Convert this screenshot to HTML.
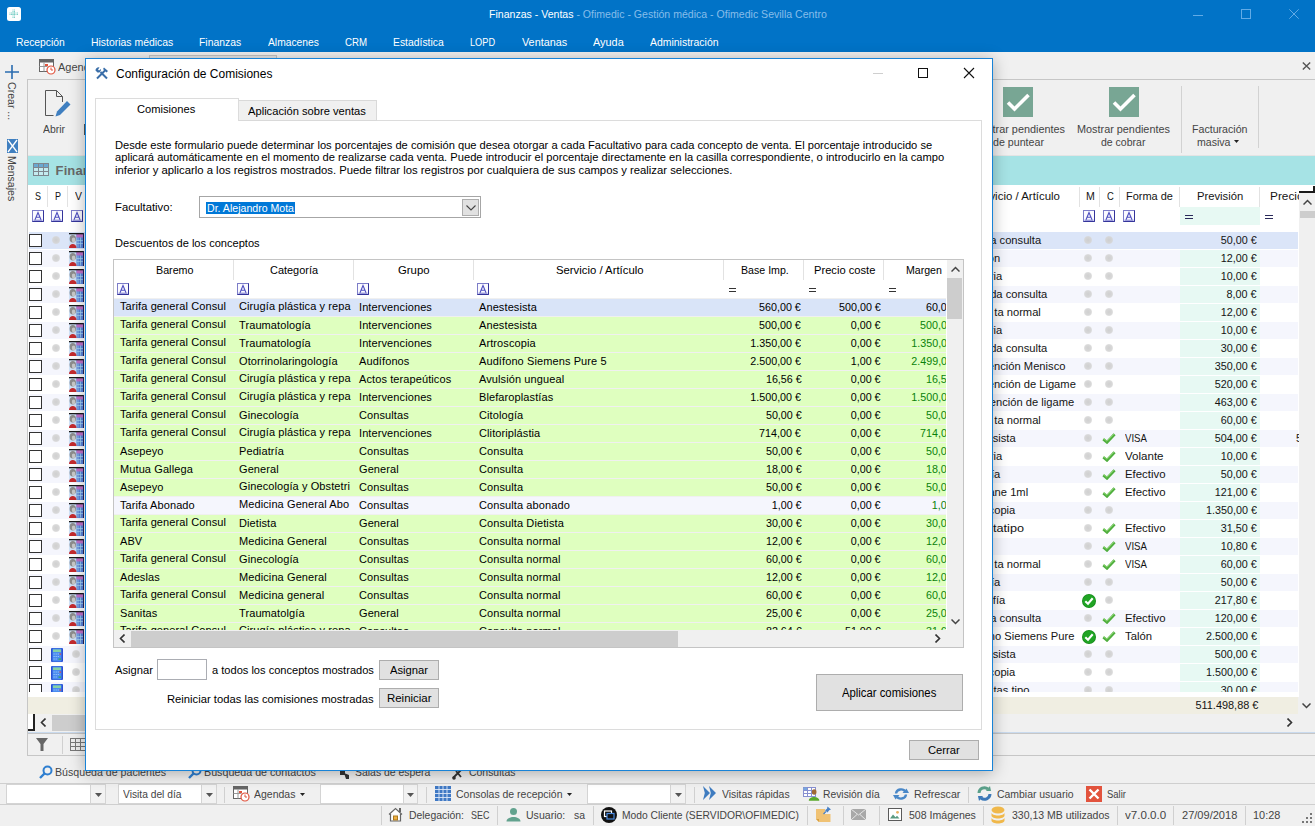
<!DOCTYPE html><html lang="es"><head><meta charset="utf-8"><title>Ofimedic</title><style>
*{box-sizing:border-box;margin:0;padding:0}
html,body{width:1315px;height:826px;overflow:hidden;background:#f0f0f0}
body{position:relative;font-family:"Liberation Sans",sans-serif;font-size:12px;color:#222}
.a{position:absolute;white-space:nowrap}
.w{color:#fff}
.ui{color:#444}
.g{color:#141414}
.d{color:#000}
</style></head><body>
<div class="a" style="left:0px;top:0px;width:1315px;height:52px;background:#0173c7;"></div>
<svg class="a" style="left:7px;top:7px" width="14" height="14" viewBox="0 0 14 14"><rect x="0" y="0" width="14" height="14" rx="2.500" fill="#fdfefe"/><path d="M6 2.500v9M7.500 2.500v9M2.500 6h9M2.500 7.500h9" stroke="#7fd0c8" stroke-width="1" stroke-dasharray="1 0.500" fill="none"/></svg>
<div class="a w" style="left:488.5px;top:7.39px;font-size:11px;line-height:14px;transform-origin:0 0;transform:scaleX(0.9592);">Finanzas - Ventas<span style="color:#86bdea"> - Ofimedic - Gestión médica - Ofimedic Sevilla Centro</span></div>
<div class="a" style="left:1193px;top:15px;width:10px;height:1px;background:#62abe6;"></div>
<div class="a" style="left:1241px;top:9px;width:10px;height:10px;background:transparent;border:1px solid #62abe6"></div>
<svg class="a" style="left:1289px;top:9px" width="10" height="10" viewBox="0 0 10 10"><path d="M0.300 0.300L9.700 9.700M9.700 0.300L0.300 9.700" stroke="#62abe6" stroke-width="1" fill="none"/></svg>
<div class="a w" style="left:16.4px;top:35.49px;font-size:11px;line-height:14px;transform-origin:0 0;transform:scaleX(0.9387);">Recepción</div>
<div class="a w" style="left:91.3px;top:35.49px;font-size:11px;line-height:14px;transform-origin:0 0;transform:scaleX(0.9480);">Historias médicas</div>
<div class="a w" style="left:199.4px;top:35.49px;font-size:11px;line-height:14px;transform-origin:0 0;transform:scaleX(0.9431);">Finanzas</div>
<div class="a w" style="left:267.6px;top:35.49px;font-size:11px;line-height:14px;transform-origin:0 0;transform:scaleX(0.9353);">Almacenes</div>
<div class="a w" style="left:344.6px;top:35.49px;font-size:11px;line-height:14px;transform-origin:0 0;transform:scaleX(0.8818);">CRM</div>
<div class="a w" style="left:392.6px;top:35.49px;font-size:11px;line-height:14px;transform-origin:0 0;transform:scaleX(0.9422);">Estadística</div>
<div class="a w" style="left:469.9px;top:35.49px;font-size:11px;line-height:14px;transform-origin:0 0;transform:scaleX(0.8375);">LOPD</div>
<div class="a w" style="left:521.7px;top:35.49px;font-size:11px;line-height:14px;transform-origin:0 0;transform:scaleX(0.9831);">Ventanas</div>
<div class="a w" style="left:592.7px;top:35.49px;font-size:11px;line-height:14px;transform-origin:0 0;transform:scaleX(0.9903);">Ayuda</div>
<div class="a w" style="left:649.7px;top:35.49px;font-size:11px;line-height:14px;transform-origin:0 0;transform:scaleX(0.9495);">Administración</div>
<svg class="a" style="left:5px;top:65px" width="14" height="14" viewBox="0 0 14 14"><path d="M7 0v14M0 7h14" stroke="#2a6cb0" stroke-width="1.600" fill="none"/></svg>
<div class="a ui" style="left:17px;top:82px;font-size:11px;line-height:10px;transform-origin:0 0;transform:rotate(90deg) scaleX(0.96)">Crear ...</div>
<svg class="a" style="left:7px;top:139px" width="11" height="14" viewBox="0 0 11 14"><rect x="0" y="0" width="11" height="14" fill="#3f7fc0"/><path d="M1 1L5.500 7L1 13M10 1L5.500 7L10 13" stroke="#fff" stroke-width="1.300" fill="none"/></svg>
<div class="a ui" style="left:17px;top:156px;font-size:11px;line-height:10px;transform-origin:0 0;transform:rotate(90deg) scaleX(0.96)">Mensajes</div>
<svg class="a" style="left:39px;top:59px" width="17" height="16" viewBox="0 0 17 16"><rect x="0.500" y="0.500" width="14" height="12" fill="#fff" stroke="#666"/><rect x="0.500" y="0.500" width="14" height="3" fill="#666"/><path d="M0.500 7.500h8M5 3.500v9" stroke="#999" fill="none"/><rect x="6" y="5" width="3" height="2" fill="#e0533d"/><circle cx="12" cy="11" r="4" fill="#fff" stroke="#e0533d" stroke-width="1.200"/><path d="M12 8.500V11h2" stroke="#e0533d" fill="none"/></svg>
<div class="a ui" style="left:58.1px;top:60.19px;font-size:11px;line-height:14px;transform-origin:0 0;transform:scaleX(0.9990);">Agenda</div>
<div class="a" style="left:149px;top:55px;width:128px;height:26px;background:#e6e6e6;border:1px solid #c4c4c4;border-bottom:none"></div>
<svg class="a" style="left:1302px;top:62px" width="9" height="8" viewBox="0 0 9 8"><path d="M0.800 0.500L8.200 7.500M8.200 0.500L0.800 7.500" stroke="#555" stroke-width="1.400" fill="none"/></svg>
<div class="a" style="left:27px;top:79px;width:1288px;height:677px;background:#f0f0f0;border-left:1px solid #c6c6c6;border-top:1px solid #c6c6c6;border-bottom:1px solid #c6c6c6"></div>
<svg class="a" style="left:44px;top:90px" width="27" height="30" viewBox="0 0 27 30"><path d="M1.500 0.500h11l6 6v5.500M1.500 0.500v25h8" stroke="#555" fill="none"/><path d="M12.500 0.500v6h6" stroke="#555" fill="none"/><path d="M23 11l3.500 3.500L16 25l-4.500 1.500L13 21.500z" fill="#3f7fc0"/></svg>
<div class="a ui" style="left:43px;top:122.19px;font-size:11px;line-height:14px;transform-origin:0 0;transform:scaleX(0.9469);">Abrir</div>
<div class="a" style="left:84px;top:124px;width:2px;height:11px;background:#555;"></div>
<svg class="a" style="left:1003px;top:87px" width="30" height="30" viewBox="0 0 30 30"><rect width="30" height="30" fill="#78a694"/><path d="M5 15.500l6.500 6.500L25.500 8" stroke="#fff" stroke-width="3.600" fill="none"/></svg>
<svg class="a" style="left:1109px;top:87px" width="30" height="30" viewBox="0 0 30 30"><rect width="30" height="30" fill="#78a694"/><path d="M5 15.500l6.500 6.500L25.500 8" stroke="#fff" stroke-width="3.600" fill="none"/></svg>
<div class="a ui" style="left:971.5px;top:122.19px;font-size:11px;line-height:14px;transform-origin:0 0;transform:scaleX(0.9876);">Mostrar pendientes</div>
<div class="a ui" style="left:992.5px;top:135.19px;font-size:11px;line-height:14px;transform-origin:0 0;transform:scaleX(0.9694);">de puntear</div>
<div class="a ui" style="left:1077.3px;top:122.19px;font-size:11px;line-height:14px;transform-origin:0 0;transform:scaleX(0.9865);">Mostrar pendientes</div>
<div class="a ui" style="left:1100.7px;top:135.19px;font-size:11px;line-height:14px;transform-origin:0 0;transform:scaleX(0.9552);">de cobrar</div>
<div class="a" style="left:1181px;top:86px;width:1px;height:67px;background:#d2d2d2;"></div>
<div class="a ui" style="left:1191.5px;top:122.19px;font-size:11px;line-height:14px;transform-origin:0 0;transform:scaleX(0.9655);">Facturación</div>
<div class="a ui" style="left:1196.5px;top:135.19px;font-size:11px;line-height:14px;transform-origin:0 0;transform:scaleX(0.9614);">masiva</div>
<svg class="a" style="left:1234px;top:140px" width="5" height="3" viewBox="0 0 5 3"><path d="M0 0h5L2.500 3z" fill="#222"/></svg>
<div class="a" style="left:1258px;top:86px;width:1px;height:62px;background:#d2d2d2;"></div>
<div class="a" style="left:28px;top:155px;width:1287px;height:1px;background:#e4e4e4;"></div>
<div class="a" style="left:28px;top:156px;width:1287px;height:29px;background:#a6e3e5;"></div>
<svg class="a" style="left:33px;top:163px" width="16" height="13" viewBox="0 0 16 13"><rect x="0.500" y="0.500" width="15" height="12" fill="#c4ecf0" stroke="#7e868e"/><rect x="1" y="1" width="14" height="3" fill="#6aa8d0"/><path d="M0.500 4.500h15M0.500 8.500h15M5.500 1v12M10.500 1v12" stroke="#7e868e" fill="none"/></svg>
<div class="a ui" style="left:55.6px;top:163.50px;font-size:13px;line-height:14px;font-weight:bold;color:#686868;letter-spacing:0.1px">Finanzas</div>
<div class="a" style="left:28px;top:185px;width:1271px;height:512px;background:#fff;"></div>
<div class="a g" style="left:35px;top:188.79px;font-size:11px;line-height:14px;transform-origin:0 0;transform:scaleX(0.8170);">S</div>
<div class="a g" style="left:55px;top:188.79px;font-size:11px;line-height:14px;transform-origin:0 0;transform:scaleX(0.8170);">P</div>
<div class="a g" style="left:75px;top:188.79px;font-size:11px;line-height:14px;transform-origin:0 0;transform:scaleX(0.9532);">V</div>
<div class="a" style="left:47px;top:186px;width:1px;height:21px;background:#e2e2e2;"></div>
<div class="a" style="left:67px;top:186px;width:1px;height:21px;background:#e2e2e2;"></div>
<svg class="a" style="left:32px;top:210px" width="12" height="12" viewBox="0 0 12 12"><rect x="0.500" y="0.500" width="11" height="11" fill="#fbfbff" stroke="#7d7dc8"/><path d="M11.500 0.500v11h-11" stroke="#34349a" fill="none"/><path d="M3 9.800L6 2.500L9 9.800M4 7.200h4" stroke="#5050c0" stroke-width="1.100" fill="none"/><path d="M1.500 10.200h9" stroke="#5050c0" stroke-width="0.800" fill="none"/></svg>
<svg class="a" style="left:51px;top:210px" width="12" height="12" viewBox="0 0 12 12"><rect x="0.500" y="0.500" width="11" height="11" fill="#fbfbff" stroke="#7d7dc8"/><path d="M11.500 0.500v11h-11" stroke="#34349a" fill="none"/><path d="M3 9.800L6 2.500L9 9.800M4 7.200h4" stroke="#5050c0" stroke-width="1.100" fill="none"/><path d="M1.500 10.200h9" stroke="#5050c0" stroke-width="0.800" fill="none"/></svg>
<svg class="a" style="left:71px;top:210px" width="12" height="12" viewBox="0 0 12 12"><rect x="0.500" y="0.500" width="11" height="11" fill="#fbfbff" stroke="#7d7dc8"/><path d="M11.500 0.500v11h-11" stroke="#34349a" fill="none"/><path d="M3 9.800L6 2.500L9 9.800M4 7.200h4" stroke="#5050c0" stroke-width="1.100" fill="none"/><path d="M1.500 10.200h9" stroke="#5050c0" stroke-width="0.800" fill="none"/></svg>
<svg class="a" style="left:1083px;top:210px" width="12" height="12" viewBox="0 0 12 12"><rect x="0.500" y="0.500" width="11" height="11" fill="#fbfbff" stroke="#7d7dc8"/><path d="M11.500 0.500v11h-11" stroke="#34349a" fill="none"/><path d="M3 9.800L6 2.500L9 9.800M4 7.200h4" stroke="#5050c0" stroke-width="1.100" fill="none"/><path d="M1.500 10.200h9" stroke="#5050c0" stroke-width="0.800" fill="none"/></svg>
<svg class="a" style="left:1103px;top:210px" width="12" height="12" viewBox="0 0 12 12"><rect x="0.500" y="0.500" width="11" height="11" fill="#fbfbff" stroke="#7d7dc8"/><path d="M11.500 0.500v11h-11" stroke="#34349a" fill="none"/><path d="M3 9.800L6 2.500L9 9.800M4 7.200h4" stroke="#5050c0" stroke-width="1.100" fill="none"/><path d="M1.500 10.200h9" stroke="#5050c0" stroke-width="0.800" fill="none"/></svg>
<svg class="a" style="left:1123px;top:210px" width="12" height="12" viewBox="0 0 12 12"><rect x="0.500" y="0.500" width="11" height="11" fill="#fbfbff" stroke="#7d7dc8"/><path d="M11.500 0.500v11h-11" stroke="#34349a" fill="none"/><path d="M3 9.800L6 2.500L9 9.800M4 7.200h4" stroke="#5050c0" stroke-width="1.100" fill="none"/><path d="M1.500 10.200h9" stroke="#5050c0" stroke-width="0.800" fill="none"/></svg>
<div class="a g" style="right:255.2px;top:188.79px;font-size:11px;line-height:14px;transform-origin:100% 0;transform:scaleX(1.04);">Servicio / Artículo</div>
<div class="a g" style="left:1085.9px;top:188.79px;font-size:11px;line-height:14px;transform-origin:0 0;transform:scaleX(0.9595);">M</div>
<div class="a g" style="left:1107.2px;top:188.79px;font-size:11px;line-height:14px;transform-origin:0 0;transform:scaleX(0.8550);">C</div>
<div class="a g" style="left:1126.3px;top:188.79px;font-size:11px;line-height:14px;transform-origin:0 0;transform:scaleX(0.9962);">Forma de</div>
<div class="a g" style="left:1197.3px;top:188.79px;font-size:11px;line-height:14px;transform-origin:0 0;transform:scaleX(1.0210);">Previsión</div>
<div class="a" style="left:1270px;top:186px;width:29px;height:20px;overflow:hidden">
<div class="a g" style="left:0.300px;top:2.790px;font-size:11px;line-height:14px;transform-origin:0 0;transform:scaleX(1.0741);">Precio</div></div>
<div class="a" style="left:1079px;top:187px;width:1px;height:20px;background:#e2e2e2;"></div>
<div class="a" style="left:1099px;top:187px;width:1px;height:20px;background:#e2e2e2;"></div>
<div class="a" style="left:1119px;top:187px;width:1px;height:20px;background:#e2e2e2;"></div>
<div class="a" style="left:1179px;top:187px;width:1px;height:20px;background:#e2e2e2;"></div>
<div class="a" style="left:1259px;top:187px;width:1px;height:20px;background:#e2e2e2;"></div>
<div class="a" style="left:1180px;top:207px;width:80px;height:18px;background:#e7f9f3;"></div>
<div class="a" style="left:1185px;top:215px;width:8px;height:1px;background:#2a2a5a;"></div>
<div class="a" style="left:1185px;top:218px;width:8px;height:1px;background:#2a2a5a;"></div>
<div class="a" style="left:1265px;top:215px;width:8px;height:1px;background:#2a2a5a;"></div>
<div class="a" style="left:1265px;top:218px;width:8px;height:1px;background:#2a2a5a;"></div>
<div class="a" style="left:0;top:0;width:1299px;height:692px;overflow:hidden">
<div class="a" style="left:29px;top:232px;width:1269px;height:17px;background:#dbe5f8;"></div>
<div class="a" style="left:29px;top:234px;width:13px;height:13px;background:#fff;border:1px solid #333"></div>
<div class="a" style="left:52px;top:236px;width:8px;height:8px;border-radius:50%;background:radial-gradient(circle at 50% 50%,rgba(205,205,205,0.950) 0%,rgba(212,212,212,0.900) 55%,rgba(222,222,222,0.400) 85%,rgba(230,230,230,0) 100%)"></div>
<svg class="a" style="left:69px;top:233px" width="15" height="15" viewBox="0 0 15 15"><rect x="0" y="0" width="15" height="15" fill="#cfe2f8"/><rect x="7.500" y="1" width="7" height="14" fill="#5a84dc"/><rect x="7.500" y="1" width="7" height="3.500" fill="#c070c8"/><path d="M9 4.500v10M11.500 4.500v10M7.500 7.500h7M7.500 10.500h7" stroke="#a8d8f0" stroke-width="0.700" fill="none"/><ellipse cx="3.800" cy="5.800" rx="3.200" ry="3.800" fill="#8c8c8c"/><ellipse cx="4.600" cy="7" rx="1.800" ry="2.400" fill="#c8c8c8"/><path d="M0 15c0-5.500 7.500-5.500 7.500 0z" fill="#c42a2e"/><rect x="0" y="0" width="15" height="1.300" fill="#1a1a1a"/><rect x="14" y="0" width="1" height="15" fill="#22225a"/></svg>
<div class="a g" style="right:257.9px;top:233.19px;font-size:11px;line-height:14px;transform-origin:100% 0;transform:scaleX(1.015);">a consulta</div>
<div class="a" style="left:1084px;top:236px;width:8px;height:8px;border-radius:50%;background:radial-gradient(circle at 50% 50%,rgba(205,205,205,0.950) 0%,rgba(212,212,212,0.900) 55%,rgba(222,222,222,0.400) 85%,rgba(230,230,230,0) 100%)"></div>
<div class="a" style="left:1104.5px;top:236px;width:8px;height:8px;border-radius:50%;background:radial-gradient(circle at 50% 50%,rgba(205,205,205,0.950) 0%,rgba(212,212,212,0.900) 55%,rgba(222,222,222,0.400) 85%,rgba(230,230,230,0) 100%)"></div>
<div class="a g" style="right:42px;top:233.19px;font-size:11px;line-height:14px;transform-origin:100% 0;transform:scaleX(0.98);">50,00 €</div>
<div class="a" style="left:29px;top:250px;width:1269px;height:17px;background:#f5f6fd;"></div>
<div class="a" style="left:1180px;top:250px;width:80px;height:17px;background:#e7f9f3;"></div>
<div class="a" style="left:29px;top:252px;width:13px;height:13px;background:#fff;border:1px solid #333"></div>
<div class="a" style="left:52px;top:254px;width:8px;height:8px;border-radius:50%;background:radial-gradient(circle at 50% 50%,rgba(205,205,205,0.950) 0%,rgba(212,212,212,0.900) 55%,rgba(222,222,222,0.400) 85%,rgba(230,230,230,0) 100%)"></div>
<svg class="a" style="left:69px;top:251px" width="15" height="15" viewBox="0 0 15 15"><rect x="0" y="0" width="15" height="15" fill="#cfe2f8"/><rect x="7.500" y="1" width="7" height="14" fill="#5a84dc"/><rect x="7.500" y="1" width="7" height="3.500" fill="#c070c8"/><path d="M9 4.500v10M11.500 4.500v10M7.500 7.500h7M7.500 10.500h7" stroke="#a8d8f0" stroke-width="0.700" fill="none"/><ellipse cx="3.800" cy="5.800" rx="3.200" ry="3.800" fill="#8c8c8c"/><ellipse cx="4.600" cy="7" rx="1.800" ry="2.400" fill="#c8c8c8"/><path d="M0 15c0-5.500 7.500-5.500 7.500 0z" fill="#c42a2e"/><rect x="0" y="0" width="15" height="1.300" fill="#1a1a1a"/><rect x="14" y="0" width="1" height="15" fill="#22225a"/></svg>
<div class="a g" style="right:298.6px;top:251.19px;font-size:11px;line-height:14px;transform-origin:100% 0;transform:scaleX(1.015);">ón</div>
<div class="a" style="left:1084px;top:254px;width:8px;height:8px;border-radius:50%;background:radial-gradient(circle at 50% 50%,rgba(205,205,205,0.950) 0%,rgba(212,212,212,0.900) 55%,rgba(222,222,222,0.400) 85%,rgba(230,230,230,0) 100%)"></div>
<div class="a" style="left:1104.5px;top:254px;width:8px;height:8px;border-radius:50%;background:radial-gradient(circle at 50% 50%,rgba(205,205,205,0.950) 0%,rgba(212,212,212,0.900) 55%,rgba(222,222,222,0.400) 85%,rgba(230,230,230,0) 100%)"></div>
<div class="a g" style="right:42px;top:251.19px;font-size:11px;line-height:14px;transform-origin:100% 0;transform:scaleX(0.98);">12,00 €</div>
<div class="a" style="left:29px;top:268px;width:1269px;height:17px;background:#ffffff;"></div>
<div class="a" style="left:1180px;top:268px;width:80px;height:17px;background:#e7f9f3;"></div>
<div class="a" style="left:29px;top:270px;width:13px;height:13px;background:#fff;border:1px solid #333"></div>
<div class="a" style="left:52px;top:272px;width:8px;height:8px;border-radius:50%;background:radial-gradient(circle at 50% 50%,rgba(205,205,205,0.950) 0%,rgba(212,212,212,0.900) 55%,rgba(222,222,222,0.400) 85%,rgba(230,230,230,0) 100%)"></div>
<svg class="a" style="left:69px;top:269px" width="15" height="15" viewBox="0 0 15 15"><rect x="0" y="0" width="15" height="15" fill="#cfe2f8"/><rect x="7.500" y="1" width="7" height="14" fill="#5a84dc"/><rect x="7.500" y="1" width="7" height="3.500" fill="#c070c8"/><path d="M9 4.500v10M11.500 4.500v10M7.500 7.500h7M7.500 10.500h7" stroke="#a8d8f0" stroke-width="0.700" fill="none"/><ellipse cx="3.800" cy="5.800" rx="3.200" ry="3.800" fill="#8c8c8c"/><ellipse cx="4.600" cy="7" rx="1.800" ry="2.400" fill="#c8c8c8"/><path d="M0 15c0-5.500 7.500-5.500 7.500 0z" fill="#c42a2e"/><rect x="0" y="0" width="15" height="1.300" fill="#1a1a1a"/><rect x="14" y="0" width="1" height="15" fill="#22225a"/></svg>
<div class="a g" style="right:296.5px;top:269.19px;font-size:11px;line-height:14px;transform-origin:100% 0;transform:scaleX(1.015);">ria</div>
<div class="a" style="left:1084px;top:272px;width:8px;height:8px;border-radius:50%;background:radial-gradient(circle at 50% 50%,rgba(205,205,205,0.950) 0%,rgba(212,212,212,0.900) 55%,rgba(222,222,222,0.400) 85%,rgba(230,230,230,0) 100%)"></div>
<div class="a" style="left:1104.5px;top:272px;width:8px;height:8px;border-radius:50%;background:radial-gradient(circle at 50% 50%,rgba(205,205,205,0.950) 0%,rgba(212,212,212,0.900) 55%,rgba(222,222,222,0.400) 85%,rgba(230,230,230,0) 100%)"></div>
<div class="a g" style="right:42px;top:269.19px;font-size:11px;line-height:14px;transform-origin:100% 0;transform:scaleX(0.98);">10,00 €</div>
<div class="a" style="left:29px;top:286px;width:1269px;height:17px;background:#f5f6fd;"></div>
<div class="a" style="left:1180px;top:286px;width:80px;height:17px;background:#e7f9f3;"></div>
<div class="a" style="left:29px;top:288px;width:13px;height:13px;background:#fff;border:1px solid #333"></div>
<div class="a" style="left:52px;top:290px;width:8px;height:8px;border-radius:50%;background:radial-gradient(circle at 50% 50%,rgba(205,205,205,0.950) 0%,rgba(212,212,212,0.900) 55%,rgba(222,222,222,0.400) 85%,rgba(230,230,230,0) 100%)"></div>
<svg class="a" style="left:69px;top:287px" width="15" height="15" viewBox="0 0 15 15"><rect x="0" y="0" width="15" height="15" fill="#cfe2f8"/><rect x="7.500" y="1" width="7" height="14" fill="#5a84dc"/><rect x="7.500" y="1" width="7" height="3.500" fill="#c070c8"/><path d="M9 4.500v10M11.500 4.500v10M7.500 7.500h7M7.500 10.500h7" stroke="#a8d8f0" stroke-width="0.700" fill="none"/><ellipse cx="3.800" cy="5.800" rx="3.200" ry="3.800" fill="#8c8c8c"/><ellipse cx="4.600" cy="7" rx="1.800" ry="2.400" fill="#c8c8c8"/><path d="M0 15c0-5.500 7.500-5.500 7.500 0z" fill="#c42a2e"/><rect x="0" y="0" width="15" height="1.300" fill="#1a1a1a"/><rect x="14" y="0" width="1" height="15" fill="#22225a"/></svg>
<div class="a g" style="right:251.4px;top:287.19px;font-size:11px;line-height:14px;transform-origin:100% 0;transform:scaleX(1.015);">da consulta</div>
<div class="a" style="left:1084px;top:290px;width:8px;height:8px;border-radius:50%;background:radial-gradient(circle at 50% 50%,rgba(205,205,205,0.950) 0%,rgba(212,212,212,0.900) 55%,rgba(222,222,222,0.400) 85%,rgba(230,230,230,0) 100%)"></div>
<div class="a" style="left:1104.5px;top:290px;width:8px;height:8px;border-radius:50%;background:radial-gradient(circle at 50% 50%,rgba(205,205,205,0.950) 0%,rgba(212,212,212,0.900) 55%,rgba(222,222,222,0.400) 85%,rgba(230,230,230,0) 100%)"></div>
<div class="a g" style="right:42px;top:287.19px;font-size:11px;line-height:14px;transform-origin:100% 0;transform:scaleX(0.98);">8,00 €</div>
<div class="a" style="left:29px;top:304px;width:1269px;height:17px;background:#ffffff;"></div>
<div class="a" style="left:1180px;top:304px;width:80px;height:17px;background:#e7f9f3;"></div>
<div class="a" style="left:29px;top:306px;width:13px;height:13px;background:#fff;border:1px solid #333"></div>
<div class="a" style="left:52px;top:308px;width:8px;height:8px;border-radius:50%;background:radial-gradient(circle at 50% 50%,rgba(205,205,205,0.950) 0%,rgba(212,212,212,0.900) 55%,rgba(222,222,222,0.400) 85%,rgba(230,230,230,0) 100%)"></div>
<svg class="a" style="left:69px;top:305px" width="15" height="15" viewBox="0 0 15 15"><rect x="0" y="0" width="15" height="15" fill="#cfe2f8"/><rect x="7.500" y="1" width="7" height="14" fill="#5a84dc"/><rect x="7.500" y="1" width="7" height="3.500" fill="#c070c8"/><path d="M9 4.500v10M11.500 4.500v10M7.500 7.500h7M7.500 10.500h7" stroke="#a8d8f0" stroke-width="0.700" fill="none"/><ellipse cx="3.800" cy="5.800" rx="3.200" ry="3.800" fill="#8c8c8c"/><ellipse cx="4.600" cy="7" rx="1.800" ry="2.400" fill="#c8c8c8"/><path d="M0 15c0-5.500 7.500-5.500 7.500 0z" fill="#c42a2e"/><rect x="0" y="0" width="15" height="1.300" fill="#1a1a1a"/><rect x="14" y="0" width="1" height="15" fill="#22225a"/></svg>
<div class="a g" style="right:258.5px;top:305.19px;font-size:11px;line-height:14px;transform-origin:100% 0;transform:scaleX(1.015);">ta normal</div>
<div class="a" style="left:1084px;top:308px;width:8px;height:8px;border-radius:50%;background:radial-gradient(circle at 50% 50%,rgba(205,205,205,0.950) 0%,rgba(212,212,212,0.900) 55%,rgba(222,222,222,0.400) 85%,rgba(230,230,230,0) 100%)"></div>
<div class="a" style="left:1104.5px;top:308px;width:8px;height:8px;border-radius:50%;background:radial-gradient(circle at 50% 50%,rgba(205,205,205,0.950) 0%,rgba(212,212,212,0.900) 55%,rgba(222,222,222,0.400) 85%,rgba(230,230,230,0) 100%)"></div>
<div class="a g" style="right:42px;top:305.19px;font-size:11px;line-height:14px;transform-origin:100% 0;transform:scaleX(0.98);">12,00 €</div>
<div class="a" style="left:29px;top:322px;width:1269px;height:17px;background:#f5f6fd;"></div>
<div class="a" style="left:1180px;top:322px;width:80px;height:17px;background:#e7f9f3;"></div>
<div class="a" style="left:29px;top:324px;width:13px;height:13px;background:#fff;border:1px solid #333"></div>
<div class="a" style="left:52px;top:326px;width:8px;height:8px;border-radius:50%;background:radial-gradient(circle at 50% 50%,rgba(205,205,205,0.950) 0%,rgba(212,212,212,0.900) 55%,rgba(222,222,222,0.400) 85%,rgba(230,230,230,0) 100%)"></div>
<svg class="a" style="left:69px;top:323px" width="15" height="15" viewBox="0 0 15 15"><rect x="0" y="0" width="15" height="15" fill="#cfe2f8"/><rect x="7.500" y="1" width="7" height="14" fill="#5a84dc"/><rect x="7.500" y="1" width="7" height="3.500" fill="#c070c8"/><path d="M9 4.500v10M11.500 4.500v10M7.500 7.500h7M7.500 10.500h7" stroke="#a8d8f0" stroke-width="0.700" fill="none"/><ellipse cx="3.800" cy="5.800" rx="3.200" ry="3.800" fill="#8c8c8c"/><ellipse cx="4.600" cy="7" rx="1.800" ry="2.400" fill="#c8c8c8"/><path d="M0 15c0-5.500 7.500-5.500 7.500 0z" fill="#c42a2e"/><rect x="0" y="0" width="15" height="1.300" fill="#1a1a1a"/><rect x="14" y="0" width="1" height="15" fill="#22225a"/></svg>
<div class="a g" style="right:296.5px;top:323.19px;font-size:11px;line-height:14px;transform-origin:100% 0;transform:scaleX(1.015);">ria</div>
<div class="a" style="left:1084px;top:326px;width:8px;height:8px;border-radius:50%;background:radial-gradient(circle at 50% 50%,rgba(205,205,205,0.950) 0%,rgba(212,212,212,0.900) 55%,rgba(222,222,222,0.400) 85%,rgba(230,230,230,0) 100%)"></div>
<div class="a" style="left:1104.5px;top:326px;width:8px;height:8px;border-radius:50%;background:radial-gradient(circle at 50% 50%,rgba(205,205,205,0.950) 0%,rgba(212,212,212,0.900) 55%,rgba(222,222,222,0.400) 85%,rgba(230,230,230,0) 100%)"></div>
<div class="a g" style="right:42px;top:323.19px;font-size:11px;line-height:14px;transform-origin:100% 0;transform:scaleX(0.98);">10,00 €</div>
<div class="a" style="left:29px;top:340px;width:1269px;height:17px;background:#ffffff;"></div>
<div class="a" style="left:1180px;top:340px;width:80px;height:17px;background:#e7f9f3;"></div>
<div class="a" style="left:29px;top:342px;width:13px;height:13px;background:#fff;border:1px solid #333"></div>
<div class="a" style="left:52px;top:344px;width:8px;height:8px;border-radius:50%;background:radial-gradient(circle at 50% 50%,rgba(205,205,205,0.950) 0%,rgba(212,212,212,0.900) 55%,rgba(222,222,222,0.400) 85%,rgba(230,230,230,0) 100%)"></div>
<svg class="a" style="left:69px;top:341px" width="15" height="15" viewBox="0 0 15 15"><rect x="0" y="0" width="15" height="15" fill="#cfe2f8"/><rect x="7.500" y="1" width="7" height="14" fill="#5a84dc"/><rect x="7.500" y="1" width="7" height="3.500" fill="#c070c8"/><path d="M9 4.500v10M11.500 4.500v10M7.500 7.500h7M7.500 10.500h7" stroke="#a8d8f0" stroke-width="0.700" fill="none"/><ellipse cx="3.800" cy="5.800" rx="3.200" ry="3.800" fill="#8c8c8c"/><ellipse cx="4.600" cy="7" rx="1.800" ry="2.400" fill="#c8c8c8"/><path d="M0 15c0-5.500 7.500-5.500 7.500 0z" fill="#c42a2e"/><rect x="0" y="0" width="15" height="1.300" fill="#1a1a1a"/><rect x="14" y="0" width="1" height="15" fill="#22225a"/></svg>
<div class="a g" style="right:251.4px;top:341.19px;font-size:11px;line-height:14px;transform-origin:100% 0;transform:scaleX(1.015);">da consulta</div>
<div class="a" style="left:1084px;top:344px;width:8px;height:8px;border-radius:50%;background:radial-gradient(circle at 50% 50%,rgba(205,205,205,0.950) 0%,rgba(212,212,212,0.900) 55%,rgba(222,222,222,0.400) 85%,rgba(230,230,230,0) 100%)"></div>
<div class="a" style="left:1104.5px;top:344px;width:8px;height:8px;border-radius:50%;background:radial-gradient(circle at 50% 50%,rgba(205,205,205,0.950) 0%,rgba(212,212,212,0.900) 55%,rgba(222,222,222,0.400) 85%,rgba(230,230,230,0) 100%)"></div>
<div class="a g" style="right:42px;top:341.19px;font-size:11px;line-height:14px;transform-origin:100% 0;transform:scaleX(0.98);">30,00 €</div>
<div class="a" style="left:29px;top:358px;width:1269px;height:17px;background:#f5f6fd;"></div>
<div class="a" style="left:1180px;top:358px;width:80px;height:17px;background:#e7f9f3;"></div>
<div class="a" style="left:29px;top:360px;width:13px;height:13px;background:#fff;border:1px solid #333"></div>
<div class="a" style="left:52px;top:362px;width:8px;height:8px;border-radius:50%;background:radial-gradient(circle at 50% 50%,rgba(205,205,205,0.950) 0%,rgba(212,212,212,0.900) 55%,rgba(222,222,222,0.400) 85%,rgba(230,230,230,0) 100%)"></div>
<svg class="a" style="left:69px;top:359px" width="15" height="15" viewBox="0 0 15 15"><rect x="0" y="0" width="15" height="15" fill="#cfe2f8"/><rect x="7.500" y="1" width="7" height="14" fill="#5a84dc"/><rect x="7.500" y="1" width="7" height="3.500" fill="#c070c8"/><path d="M9 4.500v10M11.500 4.500v10M7.500 7.500h7M7.500 10.500h7" stroke="#a8d8f0" stroke-width="0.700" fill="none"/><ellipse cx="3.800" cy="5.800" rx="3.200" ry="3.800" fill="#8c8c8c"/><ellipse cx="4.600" cy="7" rx="1.800" ry="2.400" fill="#c8c8c8"/><path d="M0 15c0-5.500 7.500-5.500 7.500 0z" fill="#c42a2e"/><rect x="0" y="0" width="15" height="1.300" fill="#1a1a1a"/><rect x="14" y="0" width="1" height="15" fill="#22225a"/></svg>
<div class="a g" style="right:233.7px;top:359.19px;font-size:11px;line-height:14px;transform-origin:100% 0;transform:scaleX(1.015);">ención Menisco</div>
<div class="a" style="left:1084px;top:362px;width:8px;height:8px;border-radius:50%;background:radial-gradient(circle at 50% 50%,rgba(205,205,205,0.950) 0%,rgba(212,212,212,0.900) 55%,rgba(222,222,222,0.400) 85%,rgba(230,230,230,0) 100%)"></div>
<div class="a" style="left:1104.5px;top:362px;width:8px;height:8px;border-radius:50%;background:radial-gradient(circle at 50% 50%,rgba(205,205,205,0.950) 0%,rgba(212,212,212,0.900) 55%,rgba(222,222,222,0.400) 85%,rgba(230,230,230,0) 100%)"></div>
<div class="a g" style="right:42px;top:359.19px;font-size:11px;line-height:14px;transform-origin:100% 0;transform:scaleX(0.98);">350,00 €</div>
<div class="a" style="left:29px;top:376px;width:1269px;height:17px;background:#ffffff;"></div>
<div class="a" style="left:1180px;top:376px;width:80px;height:17px;background:#e7f9f3;"></div>
<div class="a" style="left:29px;top:378px;width:13px;height:13px;background:#fff;border:1px solid #333"></div>
<div class="a" style="left:52px;top:380px;width:8px;height:8px;border-radius:50%;background:radial-gradient(circle at 50% 50%,rgba(205,205,205,0.950) 0%,rgba(212,212,212,0.900) 55%,rgba(222,222,222,0.400) 85%,rgba(230,230,230,0) 100%)"></div>
<svg class="a" style="left:69px;top:377px" width="15" height="15" viewBox="0 0 15 15"><rect x="0" y="0" width="15" height="15" fill="#cfe2f8"/><rect x="7.500" y="1" width="7" height="14" fill="#5a84dc"/><rect x="7.500" y="1" width="7" height="3.500" fill="#c070c8"/><path d="M9 4.500v10M11.500 4.500v10M7.500 7.500h7M7.500 10.500h7" stroke="#a8d8f0" stroke-width="0.700" fill="none"/><ellipse cx="3.800" cy="5.800" rx="3.200" ry="3.800" fill="#8c8c8c"/><ellipse cx="4.600" cy="7" rx="1.800" ry="2.400" fill="#c8c8c8"/><path d="M0 15c0-5.500 7.500-5.500 7.500 0z" fill="#c42a2e"/><rect x="0" y="0" width="15" height="1.300" fill="#1a1a1a"/><rect x="14" y="0" width="1" height="15" fill="#22225a"/></svg>
<div class="a g" style="right:223.1px;top:377.19px;font-size:11px;line-height:14px;transform-origin:100% 0;transform:scaleX(1.015);">ención de Ligame</div>
<div class="a" style="left:1084px;top:380px;width:8px;height:8px;border-radius:50%;background:radial-gradient(circle at 50% 50%,rgba(205,205,205,0.950) 0%,rgba(212,212,212,0.900) 55%,rgba(222,222,222,0.400) 85%,rgba(230,230,230,0) 100%)"></div>
<div class="a" style="left:1104.5px;top:380px;width:8px;height:8px;border-radius:50%;background:radial-gradient(circle at 50% 50%,rgba(205,205,205,0.950) 0%,rgba(212,212,212,0.900) 55%,rgba(222,222,222,0.400) 85%,rgba(230,230,230,0) 100%)"></div>
<div class="a g" style="right:42px;top:377.19px;font-size:11px;line-height:14px;transform-origin:100% 0;transform:scaleX(0.98);">520,00 €</div>
<div class="a" style="left:29px;top:394px;width:1269px;height:17px;background:#f5f6fd;"></div>
<div class="a" style="left:1180px;top:394px;width:80px;height:17px;background:#e7f9f3;"></div>
<div class="a" style="left:29px;top:396px;width:13px;height:13px;background:#fff;border:1px solid #333"></div>
<div class="a" style="left:52px;top:398px;width:8px;height:8px;border-radius:50%;background:radial-gradient(circle at 50% 50%,rgba(205,205,205,0.950) 0%,rgba(212,212,212,0.900) 55%,rgba(222,222,222,0.400) 85%,rgba(230,230,230,0) 100%)"></div>
<svg class="a" style="left:69px;top:395px" width="15" height="15" viewBox="0 0 15 15"><rect x="0" y="0" width="15" height="15" fill="#cfe2f8"/><rect x="7.500" y="1" width="7" height="14" fill="#5a84dc"/><rect x="7.500" y="1" width="7" height="3.500" fill="#c070c8"/><path d="M9 4.500v10M11.500 4.500v10M7.500 7.500h7M7.500 10.500h7" stroke="#a8d8f0" stroke-width="0.700" fill="none"/><ellipse cx="3.800" cy="5.800" rx="3.200" ry="3.800" fill="#8c8c8c"/><ellipse cx="4.600" cy="7" rx="1.800" ry="2.400" fill="#c8c8c8"/><path d="M0 15c0-5.500 7.500-5.500 7.500 0z" fill="#c42a2e"/><rect x="0" y="0" width="15" height="1.300" fill="#1a1a1a"/><rect x="14" y="0" width="1" height="15" fill="#22225a"/></svg>
<div class="a g" style="right:225.1px;top:395.19px;font-size:11px;line-height:14px;transform-origin:100% 0;transform:scaleX(1.015);">ención de ligame</div>
<div class="a" style="left:1084px;top:398px;width:8px;height:8px;border-radius:50%;background:radial-gradient(circle at 50% 50%,rgba(205,205,205,0.950) 0%,rgba(212,212,212,0.900) 55%,rgba(222,222,222,0.400) 85%,rgba(230,230,230,0) 100%)"></div>
<div class="a" style="left:1104.5px;top:398px;width:8px;height:8px;border-radius:50%;background:radial-gradient(circle at 50% 50%,rgba(205,205,205,0.950) 0%,rgba(212,212,212,0.900) 55%,rgba(222,222,222,0.400) 85%,rgba(230,230,230,0) 100%)"></div>
<div class="a g" style="right:42px;top:395.19px;font-size:11px;line-height:14px;transform-origin:100% 0;transform:scaleX(0.98);">463,00 €</div>
<div class="a" style="left:29px;top:412px;width:1269px;height:17px;background:#ffffff;"></div>
<div class="a" style="left:1180px;top:412px;width:80px;height:17px;background:#e7f9f3;"></div>
<div class="a" style="left:29px;top:414px;width:13px;height:13px;background:#fff;border:1px solid #333"></div>
<div class="a" style="left:52px;top:416px;width:8px;height:8px;border-radius:50%;background:radial-gradient(circle at 50% 50%,rgba(205,205,205,0.950) 0%,rgba(212,212,212,0.900) 55%,rgba(222,222,222,0.400) 85%,rgba(230,230,230,0) 100%)"></div>
<svg class="a" style="left:69px;top:413px" width="15" height="15" viewBox="0 0 15 15"><rect x="0" y="0" width="15" height="15" fill="#cfe2f8"/><rect x="7.500" y="1" width="7" height="14" fill="#5a84dc"/><rect x="7.500" y="1" width="7" height="3.500" fill="#c070c8"/><path d="M9 4.500v10M11.500 4.500v10M7.500 7.500h7M7.500 10.500h7" stroke="#a8d8f0" stroke-width="0.700" fill="none"/><ellipse cx="3.800" cy="5.800" rx="3.200" ry="3.800" fill="#8c8c8c"/><ellipse cx="4.600" cy="7" rx="1.800" ry="2.400" fill="#c8c8c8"/><path d="M0 15c0-5.500 7.500-5.500 7.500 0z" fill="#c42a2e"/><rect x="0" y="0" width="15" height="1.300" fill="#1a1a1a"/><rect x="14" y="0" width="1" height="15" fill="#22225a"/></svg>
<div class="a g" style="right:258.5px;top:413.19px;font-size:11px;line-height:14px;transform-origin:100% 0;transform:scaleX(1.015);">ta normal</div>
<div class="a" style="left:1084px;top:416px;width:8px;height:8px;border-radius:50%;background:radial-gradient(circle at 50% 50%,rgba(205,205,205,0.950) 0%,rgba(212,212,212,0.900) 55%,rgba(222,222,222,0.400) 85%,rgba(230,230,230,0) 100%)"></div>
<div class="a" style="left:1104.5px;top:416px;width:8px;height:8px;border-radius:50%;background:radial-gradient(circle at 50% 50%,rgba(205,205,205,0.950) 0%,rgba(212,212,212,0.900) 55%,rgba(222,222,222,0.400) 85%,rgba(230,230,230,0) 100%)"></div>
<div class="a g" style="right:42px;top:413.19px;font-size:11px;line-height:14px;transform-origin:100% 0;transform:scaleX(0.98);">60,00 €</div>
<div class="a" style="left:29px;top:430px;width:1269px;height:17px;background:#f5f6fd;"></div>
<div class="a" style="left:1180px;top:430px;width:80px;height:17px;background:#e7f9f3;"></div>
<div class="a" style="left:29px;top:432px;width:13px;height:13px;background:#fff;border:1px solid #333"></div>
<div class="a" style="left:52px;top:434px;width:8px;height:8px;border-radius:50%;background:radial-gradient(circle at 50% 50%,rgba(205,205,205,0.950) 0%,rgba(212,212,212,0.900) 55%,rgba(222,222,222,0.400) 85%,rgba(230,230,230,0) 100%)"></div>
<svg class="a" style="left:69px;top:431px" width="15" height="15" viewBox="0 0 15 15"><rect x="0" y="0" width="15" height="15" fill="#cfe2f8"/><rect x="7.500" y="1" width="7" height="14" fill="#5a84dc"/><rect x="7.500" y="1" width="7" height="3.500" fill="#c070c8"/><path d="M9 4.500v10M11.500 4.500v10M7.500 7.500h7M7.500 10.500h7" stroke="#a8d8f0" stroke-width="0.700" fill="none"/><ellipse cx="3.800" cy="5.800" rx="3.200" ry="3.800" fill="#8c8c8c"/><ellipse cx="4.600" cy="7" rx="1.800" ry="2.400" fill="#c8c8c8"/><path d="M0 15c0-5.500 7.500-5.500 7.500 0z" fill="#c42a2e"/><rect x="0" y="0" width="15" height="1.300" fill="#1a1a1a"/><rect x="14" y="0" width="1" height="15" fill="#22225a"/></svg>
<div class="a g" style="right:283.1px;top:431.19px;font-size:11px;line-height:14px;transform-origin:100% 0;transform:scaleX(1.015);">sista</div>
<div class="a" style="left:1084px;top:434px;width:8px;height:8px;border-radius:50%;background:radial-gradient(circle at 50% 50%,rgba(205,205,205,0.950) 0%,rgba(212,212,212,0.900) 55%,rgba(222,222,222,0.400) 85%,rgba(230,230,230,0) 100%)"></div>
<svg class="a" style="left:1101.5px;top:433px" width="14" height="11" viewBox="0 0 14 11"><path d="M1.300 6.200L5 9.300L12.600 1.300" stroke="#4fae3e" stroke-width="2.800" fill="none"/><path d="M1.600 5.500L5 8.200L12 1.100" stroke="#8ed872" stroke-width="1" fill="none"/></svg>
<div class="a g" style="left:1125px;top:431.19px;font-size:11px;line-height:14px;transform-origin:0 0;transform:scaleX(0.8773);">VISA</div>
<div class="a g" style="right:42px;top:431.19px;font-size:11px;line-height:14px;transform-origin:100% 0;transform:scaleX(0.98);">504,00 €</div>
<div class="a g" style="left:1296px;top:431.19px;font-size:11px;line-height:14px;">5</div>
<div class="a" style="left:29px;top:448px;width:1269px;height:17px;background:#ffffff;"></div>
<div class="a" style="left:1180px;top:448px;width:80px;height:17px;background:#e7f9f3;"></div>
<div class="a" style="left:29px;top:450px;width:13px;height:13px;background:#fff;border:1px solid #333"></div>
<div class="a" style="left:52px;top:452px;width:8px;height:8px;border-radius:50%;background:radial-gradient(circle at 50% 50%,rgba(205,205,205,0.950) 0%,rgba(212,212,212,0.900) 55%,rgba(222,222,222,0.400) 85%,rgba(230,230,230,0) 100%)"></div>
<svg class="a" style="left:69px;top:449px" width="15" height="15" viewBox="0 0 15 15"><rect x="0" y="0" width="15" height="15" fill="#cfe2f8"/><rect x="7.500" y="1" width="7" height="14" fill="#5a84dc"/><rect x="7.500" y="1" width="7" height="3.500" fill="#c070c8"/><path d="M9 4.500v10M11.500 4.500v10M7.500 7.500h7M7.500 10.500h7" stroke="#a8d8f0" stroke-width="0.700" fill="none"/><ellipse cx="3.800" cy="5.800" rx="3.200" ry="3.800" fill="#8c8c8c"/><ellipse cx="4.600" cy="7" rx="1.800" ry="2.400" fill="#c8c8c8"/><path d="M0 15c0-5.500 7.500-5.500 7.500 0z" fill="#c42a2e"/><rect x="0" y="0" width="15" height="1.300" fill="#1a1a1a"/><rect x="14" y="0" width="1" height="15" fill="#22225a"/></svg>
<div class="a g" style="right:296.5px;top:449.19px;font-size:11px;line-height:14px;transform-origin:100% 0;transform:scaleX(1.015);">ria</div>
<div class="a" style="left:1084px;top:452px;width:8px;height:8px;border-radius:50%;background:radial-gradient(circle at 50% 50%,rgba(205,205,205,0.950) 0%,rgba(212,212,212,0.900) 55%,rgba(222,222,222,0.400) 85%,rgba(230,230,230,0) 100%)"></div>
<svg class="a" style="left:1101.5px;top:451px" width="14" height="11" viewBox="0 0 14 11"><path d="M1.300 6.200L5 9.300L12.600 1.300" stroke="#4fae3e" stroke-width="2.800" fill="none"/><path d="M1.600 5.500L5 8.200L12 1.100" stroke="#8ed872" stroke-width="1" fill="none"/></svg>
<div class="a g" style="left:1125px;top:449.19px;font-size:11px;line-height:14px;transform-origin:0 0;transform:scaleX(1.0490);">Volante</div>
<div class="a g" style="right:42px;top:449.19px;font-size:11px;line-height:14px;transform-origin:100% 0;transform:scaleX(0.98);">10,00 €</div>
<div class="a" style="left:29px;top:466px;width:1269px;height:17px;background:#f5f6fd;"></div>
<div class="a" style="left:1180px;top:466px;width:80px;height:17px;background:#e7f9f3;"></div>
<div class="a" style="left:29px;top:468px;width:13px;height:13px;background:#fff;border:1px solid #333"></div>
<div class="a" style="left:52px;top:470px;width:8px;height:8px;border-radius:50%;background:radial-gradient(circle at 50% 50%,rgba(205,205,205,0.950) 0%,rgba(212,212,212,0.900) 55%,rgba(222,222,222,0.400) 85%,rgba(230,230,230,0) 100%)"></div>
<svg class="a" style="left:69px;top:467px" width="15" height="15" viewBox="0 0 15 15"><rect x="0" y="0" width="15" height="15" fill="#cfe2f8"/><rect x="7.500" y="1" width="7" height="14" fill="#5a84dc"/><rect x="7.500" y="1" width="7" height="3.500" fill="#c070c8"/><path d="M9 4.500v10M11.500 4.500v10M7.500 7.500h7M7.500 10.500h7" stroke="#a8d8f0" stroke-width="0.700" fill="none"/><ellipse cx="3.800" cy="5.800" rx="3.200" ry="3.800" fill="#8c8c8c"/><ellipse cx="4.600" cy="7" rx="1.800" ry="2.400" fill="#c8c8c8"/><path d="M0 15c0-5.500 7.500-5.500 7.500 0z" fill="#c42a2e"/><rect x="0" y="0" width="15" height="1.300" fill="#1a1a1a"/><rect x="14" y="0" width="1" height="15" fill="#22225a"/></svg>
<div class="a g" style="right:298.5px;top:467.19px;font-size:11px;line-height:14px;transform-origin:100% 0;transform:scaleX(1.015);">gía</div>
<div class="a" style="left:1084px;top:470px;width:8px;height:8px;border-radius:50%;background:radial-gradient(circle at 50% 50%,rgba(205,205,205,0.950) 0%,rgba(212,212,212,0.900) 55%,rgba(222,222,222,0.400) 85%,rgba(230,230,230,0) 100%)"></div>
<svg class="a" style="left:1101.5px;top:469px" width="14" height="11" viewBox="0 0 14 11"><path d="M1.300 6.200L5 9.300L12.600 1.300" stroke="#4fae3e" stroke-width="2.800" fill="none"/><path d="M1.600 5.500L5 8.200L12 1.100" stroke="#8ed872" stroke-width="1" fill="none"/></svg>
<div class="a g" style="left:1125px;top:467.19px;font-size:11px;line-height:14px;transform-origin:0 0;transform:scaleX(1.0347);">Efectivo</div>
<div class="a g" style="right:42px;top:467.19px;font-size:11px;line-height:14px;transform-origin:100% 0;transform:scaleX(0.98);">50,00 €</div>
<div class="a" style="left:29px;top:484px;width:1269px;height:17px;background:#ffffff;"></div>
<div class="a" style="left:1180px;top:484px;width:80px;height:17px;background:#e7f9f3;"></div>
<div class="a" style="left:29px;top:486px;width:13px;height:13px;background:#fff;border:1px solid #333"></div>
<div class="a" style="left:52px;top:488px;width:8px;height:8px;border-radius:50%;background:radial-gradient(circle at 50% 50%,rgba(205,205,205,0.950) 0%,rgba(212,212,212,0.900) 55%,rgba(222,222,222,0.400) 85%,rgba(230,230,230,0) 100%)"></div>
<svg class="a" style="left:69px;top:485px" width="15" height="15" viewBox="0 0 15 15"><rect x="0" y="0" width="15" height="15" fill="#cfe2f8"/><rect x="7.500" y="1" width="7" height="14" fill="#5a84dc"/><rect x="7.500" y="1" width="7" height="3.500" fill="#c070c8"/><path d="M9 4.500v10M11.500 4.500v10M7.500 7.500h7M7.500 10.500h7" stroke="#a8d8f0" stroke-width="0.700" fill="none"/><ellipse cx="3.800" cy="5.800" rx="3.200" ry="3.800" fill="#8c8c8c"/><ellipse cx="4.600" cy="7" rx="1.800" ry="2.400" fill="#c8c8c8"/><path d="M0 15c0-5.500 7.500-5.500 7.500 0z" fill="#c42a2e"/><rect x="0" y="0" width="15" height="1.300" fill="#1a1a1a"/><rect x="14" y="0" width="1" height="15" fill="#22225a"/></svg>
<div class="a g" style="right:270.8px;top:485.19px;font-size:11px;line-height:14px;transform-origin:100% 0;transform:scaleX(1.015);">ane 1ml</div>
<div class="a" style="left:1084px;top:488px;width:8px;height:8px;border-radius:50%;background:radial-gradient(circle at 50% 50%,rgba(205,205,205,0.950) 0%,rgba(212,212,212,0.900) 55%,rgba(222,222,222,0.400) 85%,rgba(230,230,230,0) 100%)"></div>
<svg class="a" style="left:1101.5px;top:487px" width="14" height="11" viewBox="0 0 14 11"><path d="M1.300 6.200L5 9.300L12.600 1.300" stroke="#4fae3e" stroke-width="2.800" fill="none"/><path d="M1.600 5.500L5 8.200L12 1.100" stroke="#8ed872" stroke-width="1" fill="none"/></svg>
<div class="a g" style="left:1125px;top:485.19px;font-size:11px;line-height:14px;transform-origin:0 0;transform:scaleX(1.0347);">Efectivo</div>
<div class="a g" style="right:42px;top:485.19px;font-size:11px;line-height:14px;transform-origin:100% 0;transform:scaleX(0.98);">121,00 €</div>
<div class="a" style="left:29px;top:502px;width:1269px;height:17px;background:#f5f6fd;"></div>
<div class="a" style="left:1180px;top:502px;width:80px;height:17px;background:#e7f9f3;"></div>
<div class="a" style="left:29px;top:504px;width:13px;height:13px;background:#fff;border:1px solid #333"></div>
<div class="a" style="left:52px;top:506px;width:8px;height:8px;border-radius:50%;background:radial-gradient(circle at 50% 50%,rgba(205,205,205,0.950) 0%,rgba(212,212,212,0.900) 55%,rgba(222,222,222,0.400) 85%,rgba(230,230,230,0) 100%)"></div>
<svg class="a" style="left:69px;top:503px" width="15" height="15" viewBox="0 0 15 15"><rect x="0" y="0" width="15" height="15" fill="#cfe2f8"/><rect x="7.500" y="1" width="7" height="14" fill="#5a84dc"/><rect x="7.500" y="1" width="7" height="3.500" fill="#c070c8"/><path d="M9 4.500v10M11.500 4.500v10M7.500 7.500h7M7.500 10.500h7" stroke="#a8d8f0" stroke-width="0.700" fill="none"/><ellipse cx="3.800" cy="5.800" rx="3.200" ry="3.800" fill="#8c8c8c"/><ellipse cx="4.600" cy="7" rx="1.800" ry="2.400" fill="#c8c8c8"/><path d="M0 15c0-5.500 7.500-5.500 7.500 0z" fill="#c42a2e"/><rect x="0" y="0" width="15" height="1.300" fill="#1a1a1a"/><rect x="14" y="0" width="1" height="15" fill="#22225a"/></svg>
<div class="a g" style="right:283.4px;top:503.19px;font-size:11px;line-height:14px;transform-origin:100% 0;transform:scaleX(1.015);">copia</div>
<div class="a" style="left:1084px;top:506px;width:8px;height:8px;border-radius:50%;background:radial-gradient(circle at 50% 50%,rgba(205,205,205,0.950) 0%,rgba(212,212,212,0.900) 55%,rgba(222,222,222,0.400) 85%,rgba(230,230,230,0) 100%)"></div>
<div class="a" style="left:1104.5px;top:506px;width:8px;height:8px;border-radius:50%;background:radial-gradient(circle at 50% 50%,rgba(205,205,205,0.950) 0%,rgba(212,212,212,0.900) 55%,rgba(222,222,222,0.400) 85%,rgba(230,230,230,0) 100%)"></div>
<div class="a g" style="right:42px;top:503.19px;font-size:11px;line-height:14px;transform-origin:100% 0;transform:scaleX(0.98);">1.350,00 €</div>
<div class="a" style="left:29px;top:520px;width:1269px;height:17px;background:#ffffff;"></div>
<div class="a" style="left:1180px;top:520px;width:80px;height:17px;background:#e7f9f3;"></div>
<div class="a" style="left:29px;top:522px;width:13px;height:13px;background:#fff;border:1px solid #333"></div>
<div class="a" style="left:52px;top:524px;width:8px;height:8px;border-radius:50%;background:radial-gradient(circle at 50% 50%,rgba(205,205,205,0.950) 0%,rgba(212,212,212,0.900) 55%,rgba(222,222,222,0.400) 85%,rgba(230,230,230,0) 100%)"></div>
<svg class="a" style="left:69px;top:521px" width="15" height="15" viewBox="0 0 15 15"><rect x="0" y="0" width="15" height="15" fill="#cfe2f8"/><rect x="7.500" y="1" width="7" height="14" fill="#5a84dc"/><rect x="7.500" y="1" width="7" height="3.500" fill="#c070c8"/><path d="M9 4.500v10M11.500 4.500v10M7.500 7.500h7M7.500 10.500h7" stroke="#a8d8f0" stroke-width="0.700" fill="none"/><ellipse cx="3.800" cy="5.800" rx="3.200" ry="3.800" fill="#8c8c8c"/><ellipse cx="4.600" cy="7" rx="1.800" ry="2.400" fill="#c8c8c8"/><path d="M0 15c0-5.500 7.500-5.500 7.500 0z" fill="#c42a2e"/><rect x="0" y="0" width="15" height="1.300" fill="#1a1a1a"/><rect x="14" y="0" width="1" height="15" fill="#22225a"/></svg>
<div class="a g" style="left:993.3px;top:521.19px;font-size:11px;line-height:14px;transform-origin:0 0;transform:scaleX(1.1515);">tatipo</div>
<div class="a" style="left:1084px;top:524px;width:8px;height:8px;border-radius:50%;background:radial-gradient(circle at 50% 50%,rgba(205,205,205,0.950) 0%,rgba(212,212,212,0.900) 55%,rgba(222,222,222,0.400) 85%,rgba(230,230,230,0) 100%)"></div>
<svg class="a" style="left:1101.5px;top:523px" width="14" height="11" viewBox="0 0 14 11"><path d="M1.300 6.200L5 9.300L12.600 1.300" stroke="#4fae3e" stroke-width="2.800" fill="none"/><path d="M1.600 5.500L5 8.200L12 1.100" stroke="#8ed872" stroke-width="1" fill="none"/></svg>
<div class="a g" style="left:1125px;top:521.19px;font-size:11px;line-height:14px;transform-origin:0 0;transform:scaleX(1.0347);">Efectivo</div>
<div class="a g" style="right:42px;top:521.19px;font-size:11px;line-height:14px;transform-origin:100% 0;transform:scaleX(0.98);">31,50 €</div>
<div class="a" style="left:29px;top:538px;width:1269px;height:17px;background:#f5f6fd;"></div>
<div class="a" style="left:1180px;top:538px;width:80px;height:17px;background:#e7f9f3;"></div>
<div class="a" style="left:29px;top:540px;width:13px;height:13px;background:#fff;border:1px solid #333"></div>
<div class="a" style="left:52px;top:542px;width:8px;height:8px;border-radius:50%;background:radial-gradient(circle at 50% 50%,rgba(205,205,205,0.950) 0%,rgba(212,212,212,0.900) 55%,rgba(222,222,222,0.400) 85%,rgba(230,230,230,0) 100%)"></div>
<svg class="a" style="left:69px;top:539px" width="15" height="15" viewBox="0 0 15 15"><rect x="0" y="0" width="15" height="15" fill="#cfe2f8"/><rect x="7.500" y="1" width="7" height="14" fill="#5a84dc"/><rect x="7.500" y="1" width="7" height="3.500" fill="#c070c8"/><path d="M9 4.500v10M11.500 4.500v10M7.500 7.500h7M7.500 10.500h7" stroke="#a8d8f0" stroke-width="0.700" fill="none"/><ellipse cx="3.800" cy="5.800" rx="3.200" ry="3.800" fill="#8c8c8c"/><ellipse cx="4.600" cy="7" rx="1.800" ry="2.400" fill="#c8c8c8"/><path d="M0 15c0-5.500 7.500-5.500 7.500 0z" fill="#c42a2e"/><rect x="0" y="0" width="15" height="1.300" fill="#1a1a1a"/><rect x="14" y="0" width="1" height="15" fill="#22225a"/></svg>
<div class="a" style="left:1084px;top:542px;width:8px;height:8px;border-radius:50%;background:radial-gradient(circle at 50% 50%,rgba(205,205,205,0.950) 0%,rgba(212,212,212,0.900) 55%,rgba(222,222,222,0.400) 85%,rgba(230,230,230,0) 100%)"></div>
<svg class="a" style="left:1101.5px;top:541px" width="14" height="11" viewBox="0 0 14 11"><path d="M1.300 6.200L5 9.300L12.600 1.300" stroke="#4fae3e" stroke-width="2.800" fill="none"/><path d="M1.600 5.500L5 8.200L12 1.100" stroke="#8ed872" stroke-width="1" fill="none"/></svg>
<div class="a g" style="left:1125px;top:539.19px;font-size:11px;line-height:14px;transform-origin:0 0;transform:scaleX(0.8773);">VISA</div>
<div class="a g" style="right:42px;top:539.19px;font-size:11px;line-height:14px;transform-origin:100% 0;transform:scaleX(0.98);">10,80 €</div>
<div class="a" style="left:29px;top:556px;width:1269px;height:17px;background:#ffffff;"></div>
<div class="a" style="left:1180px;top:556px;width:80px;height:17px;background:#e7f9f3;"></div>
<div class="a" style="left:29px;top:558px;width:13px;height:13px;background:#fff;border:1px solid #333"></div>
<div class="a" style="left:52px;top:560px;width:8px;height:8px;border-radius:50%;background:radial-gradient(circle at 50% 50%,rgba(205,205,205,0.950) 0%,rgba(212,212,212,0.900) 55%,rgba(222,222,222,0.400) 85%,rgba(230,230,230,0) 100%)"></div>
<svg class="a" style="left:69px;top:557px" width="15" height="15" viewBox="0 0 15 15"><rect x="0" y="0" width="15" height="15" fill="#cfe2f8"/><rect x="7.500" y="1" width="7" height="14" fill="#5a84dc"/><rect x="7.500" y="1" width="7" height="3.500" fill="#c070c8"/><path d="M9 4.500v10M11.500 4.500v10M7.500 7.500h7M7.500 10.500h7" stroke="#a8d8f0" stroke-width="0.700" fill="none"/><ellipse cx="3.800" cy="5.800" rx="3.200" ry="3.800" fill="#8c8c8c"/><ellipse cx="4.600" cy="7" rx="1.800" ry="2.400" fill="#c8c8c8"/><path d="M0 15c0-5.500 7.500-5.500 7.500 0z" fill="#c42a2e"/><rect x="0" y="0" width="15" height="1.300" fill="#1a1a1a"/><rect x="14" y="0" width="1" height="15" fill="#22225a"/></svg>
<div class="a g" style="right:258.5px;top:557.19px;font-size:11px;line-height:14px;transform-origin:100% 0;transform:scaleX(1.015);">ta normal</div>
<div class="a" style="left:1084px;top:560px;width:8px;height:8px;border-radius:50%;background:radial-gradient(circle at 50% 50%,rgba(205,205,205,0.950) 0%,rgba(212,212,212,0.900) 55%,rgba(222,222,222,0.400) 85%,rgba(230,230,230,0) 100%)"></div>
<svg class="a" style="left:1101.5px;top:559px" width="14" height="11" viewBox="0 0 14 11"><path d="M1.300 6.200L5 9.300L12.600 1.300" stroke="#4fae3e" stroke-width="2.800" fill="none"/><path d="M1.600 5.500L5 8.200L12 1.100" stroke="#8ed872" stroke-width="1" fill="none"/></svg>
<div class="a g" style="left:1125px;top:557.19px;font-size:11px;line-height:14px;transform-origin:0 0;transform:scaleX(0.8773);">VISA</div>
<div class="a g" style="right:42px;top:557.19px;font-size:11px;line-height:14px;transform-origin:100% 0;transform:scaleX(0.98);">60,00 €</div>
<div class="a" style="left:29px;top:574px;width:1269px;height:17px;background:#f5f6fd;"></div>
<div class="a" style="left:1180px;top:574px;width:80px;height:17px;background:#e7f9f3;"></div>
<div class="a" style="left:29px;top:576px;width:13px;height:13px;background:#fff;border:1px solid #333"></div>
<div class="a" style="left:52px;top:578px;width:8px;height:8px;border-radius:50%;background:radial-gradient(circle at 50% 50%,rgba(205,205,205,0.950) 0%,rgba(212,212,212,0.900) 55%,rgba(222,222,222,0.400) 85%,rgba(230,230,230,0) 100%)"></div>
<svg class="a" style="left:69px;top:575px" width="15" height="15" viewBox="0 0 15 15"><rect x="0" y="0" width="15" height="15" fill="#cfe2f8"/><rect x="7.500" y="1" width="7" height="14" fill="#5a84dc"/><rect x="7.500" y="1" width="7" height="3.500" fill="#c070c8"/><path d="M9 4.500v10M11.500 4.500v10M7.500 7.500h7M7.500 10.500h7" stroke="#a8d8f0" stroke-width="0.700" fill="none"/><ellipse cx="3.800" cy="5.800" rx="3.200" ry="3.800" fill="#8c8c8c"/><ellipse cx="4.600" cy="7" rx="1.800" ry="2.400" fill="#c8c8c8"/><path d="M0 15c0-5.500 7.500-5.500 7.500 0z" fill="#c42a2e"/><rect x="0" y="0" width="15" height="1.300" fill="#1a1a1a"/><rect x="14" y="0" width="1" height="15" fill="#22225a"/></svg>
<div class="a g" style="right:298.5px;top:575.19px;font-size:11px;line-height:14px;transform-origin:100% 0;transform:scaleX(1.015);">gía</div>
<div class="a" style="left:1084px;top:578px;width:8px;height:8px;border-radius:50%;background:radial-gradient(circle at 50% 50%,rgba(205,205,205,0.950) 0%,rgba(212,212,212,0.900) 55%,rgba(222,222,222,0.400) 85%,rgba(230,230,230,0) 100%)"></div>
<div class="a" style="left:1104.5px;top:578px;width:8px;height:8px;border-radius:50%;background:radial-gradient(circle at 50% 50%,rgba(205,205,205,0.950) 0%,rgba(212,212,212,0.900) 55%,rgba(222,222,222,0.400) 85%,rgba(230,230,230,0) 100%)"></div>
<div class="a g" style="right:42px;top:575.19px;font-size:11px;line-height:14px;transform-origin:100% 0;transform:scaleX(0.98);">50,00 €</div>
<div class="a" style="left:29px;top:592px;width:1269px;height:17px;background:#ffffff;"></div>
<div class="a" style="left:1180px;top:592px;width:80px;height:17px;background:#e7f9f3;"></div>
<div class="a" style="left:29px;top:594px;width:13px;height:13px;background:#fff;border:1px solid #333"></div>
<div class="a" style="left:52px;top:596px;width:8px;height:8px;border-radius:50%;background:radial-gradient(circle at 50% 50%,rgba(205,205,205,0.950) 0%,rgba(212,212,212,0.900) 55%,rgba(222,222,222,0.400) 85%,rgba(230,230,230,0) 100%)"></div>
<svg class="a" style="left:69px;top:593px" width="15" height="15" viewBox="0 0 15 15"><rect x="0" y="0" width="15" height="15" fill="#cfe2f8"/><rect x="7.500" y="1" width="7" height="14" fill="#5a84dc"/><rect x="7.500" y="1" width="7" height="3.500" fill="#c070c8"/><path d="M9 4.500v10M11.500 4.500v10M7.500 7.500h7M7.500 10.500h7" stroke="#a8d8f0" stroke-width="0.700" fill="none"/><ellipse cx="3.800" cy="5.800" rx="3.200" ry="3.800" fill="#8c8c8c"/><ellipse cx="4.600" cy="7" rx="1.800" ry="2.400" fill="#c8c8c8"/><path d="M0 15c0-5.500 7.500-5.500 7.500 0z" fill="#c42a2e"/><rect x="0" y="0" width="15" height="1.300" fill="#1a1a1a"/><rect x="14" y="0" width="1" height="15" fill="#22225a"/></svg>
<div class="a g" style="right:293.8px;top:593.19px;font-size:11px;line-height:14px;transform-origin:100% 0;transform:scaleX(1.015);">fía</div>
<svg class="a" style="left:1081.5px;top:593.5px" width="14" height="14" viewBox="0 0 14 14"><circle cx="7" cy="7" r="7" fill="#178c1c"/><circle cx="7" cy="7" r="6.200" fill="#20a424"/><path d="M3.300 7.200L6 9.800L10.700 4.300" stroke="#fff" stroke-width="2.100" fill="none"/></svg>
<div class="a" style="left:1104.5px;top:596px;width:8px;height:8px;border-radius:50%;background:radial-gradient(circle at 50% 50%,rgba(205,205,205,0.950) 0%,rgba(212,212,212,0.900) 55%,rgba(222,222,222,0.400) 85%,rgba(230,230,230,0) 100%)"></div>
<div class="a g" style="right:42px;top:593.19px;font-size:11px;line-height:14px;transform-origin:100% 0;transform:scaleX(0.98);">217,80 €</div>
<div class="a" style="left:29px;top:610px;width:1269px;height:17px;background:#f5f6fd;"></div>
<div class="a" style="left:1180px;top:610px;width:80px;height:17px;background:#e7f9f3;"></div>
<div class="a" style="left:29px;top:612px;width:13px;height:13px;background:#fff;border:1px solid #333"></div>
<div class="a" style="left:52px;top:614px;width:8px;height:8px;border-radius:50%;background:radial-gradient(circle at 50% 50%,rgba(205,205,205,0.950) 0%,rgba(212,212,212,0.900) 55%,rgba(222,222,222,0.400) 85%,rgba(230,230,230,0) 100%)"></div>
<svg class="a" style="left:69px;top:611px" width="15" height="15" viewBox="0 0 15 15"><rect x="0" y="0" width="15" height="15" fill="#cfe2f8"/><rect x="7.500" y="1" width="7" height="14" fill="#5a84dc"/><rect x="7.500" y="1" width="7" height="3.500" fill="#c070c8"/><path d="M9 4.500v10M11.500 4.500v10M7.500 7.500h7M7.500 10.500h7" stroke="#a8d8f0" stroke-width="0.700" fill="none"/><ellipse cx="3.800" cy="5.800" rx="3.200" ry="3.800" fill="#8c8c8c"/><ellipse cx="4.600" cy="7" rx="1.800" ry="2.400" fill="#c8c8c8"/><path d="M0 15c0-5.500 7.500-5.500 7.500 0z" fill="#c42a2e"/><rect x="0" y="0" width="15" height="1.300" fill="#1a1a1a"/><rect x="14" y="0" width="1" height="15" fill="#22225a"/></svg>
<div class="a g" style="right:257.9px;top:611.19px;font-size:11px;line-height:14px;transform-origin:100% 0;transform:scaleX(1.015);">a consulta</div>
<div class="a" style="left:1084px;top:614px;width:8px;height:8px;border-radius:50%;background:radial-gradient(circle at 50% 50%,rgba(205,205,205,0.950) 0%,rgba(212,212,212,0.900) 55%,rgba(222,222,222,0.400) 85%,rgba(230,230,230,0) 100%)"></div>
<svg class="a" style="left:1101.5px;top:613px" width="14" height="11" viewBox="0 0 14 11"><path d="M1.300 6.200L5 9.300L12.600 1.300" stroke="#4fae3e" stroke-width="2.800" fill="none"/><path d="M1.600 5.500L5 8.200L12 1.100" stroke="#8ed872" stroke-width="1" fill="none"/></svg>
<div class="a g" style="left:1125px;top:611.19px;font-size:11px;line-height:14px;transform-origin:0 0;transform:scaleX(1.0347);">Efectivo</div>
<div class="a g" style="right:42px;top:611.19px;font-size:11px;line-height:14px;transform-origin:100% 0;transform:scaleX(0.98);">120,00 €</div>
<div class="a" style="left:29px;top:628px;width:1269px;height:17px;background:#ffffff;"></div>
<div class="a" style="left:1180px;top:628px;width:80px;height:17px;background:#e7f9f3;"></div>
<div class="a" style="left:29px;top:630px;width:13px;height:13px;background:#fff;border:1px solid #333"></div>
<div class="a" style="left:52px;top:632px;width:8px;height:8px;border-radius:50%;background:radial-gradient(circle at 50% 50%,rgba(205,205,205,0.950) 0%,rgba(212,212,212,0.900) 55%,rgba(222,222,222,0.400) 85%,rgba(230,230,230,0) 100%)"></div>
<svg class="a" style="left:69px;top:629px" width="15" height="15" viewBox="0 0 15 15"><rect x="0" y="0" width="15" height="15" fill="#cfe2f8"/><rect x="7.500" y="1" width="7" height="14" fill="#5a84dc"/><rect x="7.500" y="1" width="7" height="3.500" fill="#c070c8"/><path d="M9 4.500v10M11.500 4.500v10M7.500 7.500h7M7.500 10.500h7" stroke="#a8d8f0" stroke-width="0.700" fill="none"/><ellipse cx="3.800" cy="5.800" rx="3.200" ry="3.800" fill="#8c8c8c"/><ellipse cx="4.600" cy="7" rx="1.800" ry="2.400" fill="#c8c8c8"/><path d="M0 15c0-5.500 7.500-5.500 7.500 0z" fill="#c42a2e"/><rect x="0" y="0" width="15" height="1.300" fill="#1a1a1a"/><rect x="14" y="0" width="1" height="15" fill="#22225a"/></svg>
<div class="a g" style="right:224.5px;top:629.19px;font-size:11px;line-height:14px;transform-origin:100% 0;transform:scaleX(1.015);">no Siemens Pure</div>
<svg class="a" style="left:1081.5px;top:629.5px" width="14" height="14" viewBox="0 0 14 14"><circle cx="7" cy="7" r="7" fill="#178c1c"/><circle cx="7" cy="7" r="6.200" fill="#20a424"/><path d="M3.300 7.200L6 9.800L10.700 4.300" stroke="#fff" stroke-width="2.100" fill="none"/></svg>
<svg class="a" style="left:1101.5px;top:631px" width="14" height="11" viewBox="0 0 14 11"><path d="M1.300 6.200L5 9.300L12.600 1.300" stroke="#4fae3e" stroke-width="2.800" fill="none"/><path d="M1.600 5.500L5 8.200L12 1.100" stroke="#8ed872" stroke-width="1" fill="none"/></svg>
<div class="a g" style="left:1125px;top:629.19px;font-size:11px;line-height:14px;transform-origin:0 0;transform:scaleX(1.0267);">Talón</div>
<div class="a g" style="right:42px;top:629.19px;font-size:11px;line-height:14px;transform-origin:100% 0;transform:scaleX(0.98);">2.500,00 €</div>
<div class="a" style="left:29px;top:646px;width:1269px;height:17px;background:#f5f6fd;"></div>
<div class="a" style="left:1180px;top:646px;width:80px;height:17px;background:#e7f9f3;"></div>
<div class="a" style="left:29px;top:648px;width:13px;height:13px;background:#fff;border:1px solid #333"></div>
<svg class="a" style="left:51px;top:648px" width="12" height="14" viewBox="0 0 12 14"><rect x="0" y="0" width="12" height="14" rx="1" fill="#2a50d4"/><rect x="1.500" y="0.500" width="9" height="13" fill="#4a8cf0"/><rect x="2" y="1.500" width="8" height="2.500" fill="#86d2a4"/><path d="M2.500 6h5.500M2.500 8.500h5.500M2.500 11h4" stroke="#9cc8fa" stroke-width="1.200" stroke-dasharray="1.200 0.900" fill="none"/><rect x="8.500" y="5.500" width="1.500" height="1.200" fill="#e04848"/><rect x="7.500" y="10.500" width="2.500" height="1.200" fill="#38b048"/></svg>
<div class="a" style="left:72px;top:650px;width:8px;height:8px;border-radius:50%;background:radial-gradient(circle at 50% 50%,rgba(205,205,205,0.950) 0%,rgba(212,212,212,0.900) 55%,rgba(222,222,222,0.400) 85%,rgba(230,230,230,0) 100%)"></div>
<div class="a g" style="right:283.1px;top:647.19px;font-size:11px;line-height:14px;transform-origin:100% 0;transform:scaleX(1.015);">sista</div>
<div class="a" style="left:1084px;top:650px;width:8px;height:8px;border-radius:50%;background:radial-gradient(circle at 50% 50%,rgba(205,205,205,0.950) 0%,rgba(212,212,212,0.900) 55%,rgba(222,222,222,0.400) 85%,rgba(230,230,230,0) 100%)"></div>
<div class="a" style="left:1104.5px;top:650px;width:8px;height:8px;border-radius:50%;background:radial-gradient(circle at 50% 50%,rgba(205,205,205,0.950) 0%,rgba(212,212,212,0.900) 55%,rgba(222,222,222,0.400) 85%,rgba(230,230,230,0) 100%)"></div>
<div class="a g" style="right:42px;top:647.19px;font-size:11px;line-height:14px;transform-origin:100% 0;transform:scaleX(0.98);">500,00 €</div>
<div class="a" style="left:29px;top:664px;width:1269px;height:17px;background:#ffffff;"></div>
<div class="a" style="left:1180px;top:664px;width:80px;height:17px;background:#e7f9f3;"></div>
<div class="a" style="left:29px;top:666px;width:13px;height:13px;background:#fff;border:1px solid #333"></div>
<svg class="a" style="left:51px;top:666px" width="12" height="14" viewBox="0 0 12 14"><rect x="0" y="0" width="12" height="14" rx="1" fill="#2a50d4"/><rect x="1.500" y="0.500" width="9" height="13" fill="#4a8cf0"/><rect x="2" y="1.500" width="8" height="2.500" fill="#86d2a4"/><path d="M2.500 6h5.500M2.500 8.500h5.500M2.500 11h4" stroke="#9cc8fa" stroke-width="1.200" stroke-dasharray="1.200 0.900" fill="none"/><rect x="8.500" y="5.500" width="1.500" height="1.200" fill="#e04848"/><rect x="7.500" y="10.500" width="2.500" height="1.200" fill="#38b048"/></svg>
<div class="a" style="left:72px;top:668px;width:8px;height:8px;border-radius:50%;background:radial-gradient(circle at 50% 50%,rgba(205,205,205,0.950) 0%,rgba(212,212,212,0.900) 55%,rgba(222,222,222,0.400) 85%,rgba(230,230,230,0) 100%)"></div>
<div class="a g" style="right:283.4px;top:665.19px;font-size:11px;line-height:14px;transform-origin:100% 0;transform:scaleX(1.015);">copia</div>
<div class="a" style="left:1084px;top:668px;width:8px;height:8px;border-radius:50%;background:radial-gradient(circle at 50% 50%,rgba(205,205,205,0.950) 0%,rgba(212,212,212,0.900) 55%,rgba(222,222,222,0.400) 85%,rgba(230,230,230,0) 100%)"></div>
<div class="a" style="left:1104.5px;top:668px;width:8px;height:8px;border-radius:50%;background:radial-gradient(circle at 50% 50%,rgba(205,205,205,0.950) 0%,rgba(212,212,212,0.900) 55%,rgba(222,222,222,0.400) 85%,rgba(230,230,230,0) 100%)"></div>
<div class="a g" style="right:42px;top:665.19px;font-size:11px;line-height:14px;transform-origin:100% 0;transform:scaleX(0.98);">1.500,00 €</div>
<div class="a" style="left:29px;top:682px;width:1269px;height:17px;background:#f5f6fd;"></div>
<div class="a" style="left:1180px;top:682px;width:80px;height:17px;background:#e7f9f3;"></div>
<div class="a" style="left:29px;top:684px;width:13px;height:13px;background:#fff;border:1px solid #333"></div>
<svg class="a" style="left:51px;top:684px" width="12" height="14" viewBox="0 0 12 14"><rect x="0" y="0" width="12" height="14" rx="1" fill="#2a50d4"/><rect x="1.500" y="0.500" width="9" height="13" fill="#4a8cf0"/><rect x="2" y="1.500" width="8" height="2.500" fill="#86d2a4"/><path d="M2.500 6h5.500M2.500 8.500h5.500M2.500 11h4" stroke="#9cc8fa" stroke-width="1.200" stroke-dasharray="1.200 0.900" fill="none"/><rect x="8.500" y="5.500" width="1.500" height="1.200" fill="#e04848"/><rect x="7.500" y="10.500" width="2.500" height="1.200" fill="#38b048"/></svg>
<div class="a" style="left:72px;top:686px;width:8px;height:8px;border-radius:50%;background:radial-gradient(circle at 50% 50%,rgba(205,205,205,0.950) 0%,rgba(212,212,212,0.900) 55%,rgba(222,222,222,0.400) 85%,rgba(230,230,230,0) 100%)"></div>
<div class="a g" style="right:269.4px;top:683.19px;font-size:11px;line-height:14px;transform-origin:100% 0;transform:scaleX(1.015);">tas tipo</div>
<div class="a" style="left:1084px;top:686px;width:8px;height:8px;border-radius:50%;background:radial-gradient(circle at 50% 50%,rgba(205,205,205,0.950) 0%,rgba(212,212,212,0.900) 55%,rgba(222,222,222,0.400) 85%,rgba(230,230,230,0) 100%)"></div>
<div class="a" style="left:1104.5px;top:686px;width:8px;height:8px;border-radius:50%;background:radial-gradient(circle at 50% 50%,rgba(205,205,205,0.950) 0%,rgba(212,212,212,0.900) 55%,rgba(222,222,222,0.400) 85%,rgba(230,230,230,0) 100%)"></div>
<div class="a g" style="right:42px;top:683.19px;font-size:11px;line-height:14px;transform-origin:100% 0;transform:scaleX(0.98);">30,00 €</div>
</div>
<div class="a" style="left:1299px;top:193px;width:16px;height:523px;background:#f0f0f0;"></div>
<div class="a" style="left:1300px;top:211px;width:15px;height:7px;background:#cdcdcd;"></div>
<svg class="a" style="left:1302.500px;top:199px" width="9" height="6" viewBox="0 0 9 6"><path d="M0.500 5.500L4.500 1.500L8.500 5.500" stroke="#444" stroke-width="1.500" fill="none"/></svg>
<svg class="a" style="left:1302px;top:703px" width="9" height="6" viewBox="0 0 9 6"><path d="M0.500 0.500L4.500 4.500L8.500 0.500" stroke="#444" stroke-width="1.500" fill="none"/></svg>
<div class="a" style="left:1299px;top:185px;width:16px;height:6px;background:#fff;"></div>
<div class="a" style="left:1299px;top:191px;width:16px;height:2px;background:#1a1a1a;"></div>
<div class="a" style="left:1313px;top:186px;width:2px;height:6px;background:#1a1a1a;"></div>
<div class="a" style="left:28px;top:697px;width:1270px;height:17px;background:#f0eee2;"></div>
<div class="a g" style="right:56.7px;top:698.49px;font-size:11px;line-height:14px;transform-origin:100% 0;transform:scaleX(0.993);">511.498,88 €</div>
<div class="a" style="left:28px;top:714px;width:1271px;height:18px;background:#f0f0f0;"></div>
<div class="a" style="left:52px;top:715px;width:900px;height:16px;background:#cdcdcd;"></div>
<div class="a" style="left:28px;top:714px;width:5px;height:15px;background:#fff;"></div>
<div class="a" style="left:33px;top:714px;width:2px;height:17px;background:#222;"></div>
<div class="a" style="left:28px;top:729px;width:6px;height:2px;background:#222;"></div>
<svg class="a" style="left:40px;top:718px" width="6" height="9" viewBox="0 0 6 9"><path d="M5.500 0.500L1.500 4.500L5.500 8.500" stroke="#333" stroke-width="1.600" fill="none"/></svg>
<svg class="a" style="left:1287px;top:718px" width="6" height="9" viewBox="0 0 6 9"><path d="M0.500 0.500L4.500 4.500L0.500 8.500" stroke="#333" stroke-width="1.600" fill="none"/></svg>
<div class="a" style="left:28px;top:732px;width:1287px;height:1px;background:#c9daee;"></div>
<div class="a" style="left:28px;top:733px;width:1287px;height:1px;background:#c6c6c6;"></div>
<svg class="a" style="left:36px;top:738px" width="12" height="13" viewBox="0 0 12 13"><path d="M0 0h12L7.500 6v7h-3V6z" fill="#666"/></svg>
<div class="a" style="left:62px;top:736px;width:1px;height:18px;background:#d0d0d0;"></div>
<svg class="a" style="left:70px;top:738px" width="16" height="13" viewBox="0 0 16 13"><rect x="0.500" y="0.500" width="15" height="12" fill="#eee" stroke="#777"/><path d="M0.500 4.500h15M0.500 8.500h15M5.500 0v13M10.500 0v13" stroke="#777" fill="none"/></svg>
<svg class="a" style="left:39px;top:765px" width="14" height="14" viewBox="0 0 14 14"><circle cx="8.500" cy="5.500" r="4" fill="none" stroke="#2f7fd0" stroke-width="2"/><path d="M5.500 8.500L1 13" stroke="#2f7fd0" stroke-width="2.400" fill="none"/></svg>
<div class="a ui" style="left:55.2px;top:765.19px;font-size:11px;line-height:14px;transform-origin:0 0;transform:scaleX(0.9662);">Búsqueda de pacientes</div>
<svg class="a" style="left:188px;top:765px" width="14" height="14" viewBox="0 0 14 14"><circle cx="8.500" cy="5.500" r="4" fill="none" stroke="#2f7fd0" stroke-width="2"/><path d="M5.500 8.500L1 13" stroke="#2f7fd0" stroke-width="2.400" fill="none"/></svg>
<div class="a ui" style="left:204.4px;top:765.19px;font-size:11px;line-height:14px;transform-origin:0 0;transform:scaleX(0.9723);">Búsqueda de contactos</div>
<svg class="a" style="left:339px;top:768px" width="12" height="12" viewBox="0 0 12 12"><path d="M1 1h5v6H1zM5 5l5 2v4H7z" fill="#333"/></svg>
<div class="a ui" style="left:354.6px;top:765.19px;font-size:11px;line-height:14px;transform-origin:0 0;transform:scaleX(0.9484);">Salas de espera</div>
<svg class="a" style="left:451px;top:767px" width="13" height="13" viewBox="0 0 13 13"><path d="M2 11L10 3M5 4l5 6" stroke="#333" stroke-width="1.800" fill="none"/><circle cx="3" cy="11" r="1.800" fill="#333"/></svg>
<div class="a ui" style="left:468.6px;top:765.19px;font-size:11px;line-height:14px;transform-origin:0 0;transform:scaleX(0.9485);">Consultas</div>
<div class="a" style="left:0px;top:783px;width:1315px;height:1px;background:#cfcfcf;"></div>
<div class="a" style="left:6px;top:784px;width:100px;height:20px;background:#fff;border:1px solid #d4d4d4"></div>
<div class="a" style="left:90px;top:785px;width:15px;height:18px;background:#f2f2f2;border-left:1px solid #d4d4d4"></div>
<svg class="a" style="left:94.5px;top:793px" width="7" height="4" viewBox="0 0 7 4"><path d="M0 0h7L3.500 4z" fill="#555"/></svg>
<div class="a" style="left:118px;top:784px;width:99px;height:20px;background:#fff;border:1px solid #d4d4d4"></div>
<div class="a" style="left:201px;top:785px;width:15px;height:18px;background:#f2f2f2;border-left:1px solid #d4d4d4"></div>
<svg class="a" style="left:205.5px;top:793px" width="7" height="4" viewBox="0 0 7 4"><path d="M0 0h7L3.500 4z" fill="#555"/></svg>
<div class="a ui" style="left:122.8px;top:787.19px;font-size:11px;line-height:14px;transform-origin:0 0;transform:scaleX(0.9316);">Visita del día</div>
<div class="a" style="left:224px;top:787px;width:1px;height:16px;background:#d0d0d0;"></div>
<svg class="a" style="left:233px;top:786px" width="17" height="16" viewBox="0 0 17 16"><rect x="0.500" y="0.500" width="14" height="12" fill="#fff" stroke="#666"/><rect x="0.500" y="0.500" width="14" height="3" fill="#666"/><path d="M0.500 7.500h8M5 3.500v9" stroke="#999" fill="none"/><rect x="6" y="5" width="3" height="2" fill="#e0533d"/><circle cx="12" cy="11" r="4" fill="#fff" stroke="#e0533d" stroke-width="1.200"/><path d="M12 8.500V11h2" stroke="#e0533d" fill="none"/></svg>
<div class="a ui" style="left:253.6px;top:787.19px;font-size:11px;line-height:14px;transform-origin:0 0;transform:scaleX(0.9531);">Agendas</div>
<svg class="a" style="left:300px;top:793px" width="5" height="3" viewBox="0 0 5 3"><path d="M0 0h5L2.500 3z" fill="#222"/></svg>
<div class="a" style="left:320px;top:784px;width:98px;height:20px;background:#fff;border:1px solid #d4d4d4"></div>
<div class="a" style="left:403px;top:785px;width:14px;height:18px;background:#f2f2f2;border-left:1px solid #d4d4d4"></div>
<svg class="a" style="left:407px;top:793px" width="7" height="4" viewBox="0 0 7 4"><path d="M0 0h7L3.500 4z" fill="#555"/></svg>
<div class="a" style="left:426px;top:787px;width:1px;height:16px;background:#d0d0d0;"></div>
<svg class="a" style="left:435px;top:786px" width="16" height="15" viewBox="0 0 16 15"><rect x="0" y="0" width="16" height="15" fill="#3f78c4"/><path d="M0 3.500h16M0 7.500h16M0 11.500h16M4 0v15M8 0v15M12 0v15" stroke="#dfe9f8" stroke-width="0.900" fill="none"/></svg>
<div class="a ui" style="left:455.8px;top:787.19px;font-size:11px;line-height:14px;transform-origin:0 0;transform:scaleX(0.9517);">Consolas de recepción</div>
<svg class="a" style="left:567px;top:793px" width="5" height="3" viewBox="0 0 5 3"><path d="M0 0h5L2.500 3z" fill="#222"/></svg>
<div class="a" style="left:587px;top:784px;width:99px;height:20px;background:#fff;border:1px solid #d4d4d4"></div>
<div class="a" style="left:670px;top:785px;width:15px;height:18px;background:#f2f2f2;border-left:1px solid #d4d4d4"></div>
<svg class="a" style="left:674.5px;top:793px" width="7" height="4" viewBox="0 0 7 4"><path d="M0 0h7L3.500 4z" fill="#555"/></svg>
<div class="a" style="left:694px;top:787px;width:1px;height:16px;background:#d0d0d0;"></div>
<svg class="a" style="left:703px;top:786px" width="14" height="15" viewBox="0 0 14 15"><path d="M0 0l7 7L0 14l1.800-7zM6 0l7 7L6 14l1.800-7z" fill="#3f7cc0"/></svg>
<div class="a ui" style="left:722.4px;top:787.19px;font-size:11px;line-height:14px;transform-origin:0 0;transform:scaleX(0.9475);">Visitas rápidas</div>
<svg class="a" style="left:803px;top:787px" width="17" height="14" viewBox="0 0 17 14"><rect x="0.500" y="0.500" width="12" height="9" fill="#fff" stroke="#8890d0"/><rect x="0.500" y="0.500" width="4" height="3" fill="#78a8e0"/><path d="M0.500 3.500h12M0.500 6.500h12M4.500 0.500v9M8.500 0.500v9" stroke="#8890d0" fill="none"/><ellipse cx="11.200" cy="5" rx="2.300" ry="2.800" fill="#a06a34"/><path d="M5.800 13.800c0-5 10.500-5 10.500 0z" fill="#5aaa2c"/></svg>
<div class="a ui" style="left:823.2px;top:787.19px;font-size:11px;line-height:14px;transform-origin:0 0;transform:scaleX(0.9381);">Revisión día</div>
<svg class="a" style="left:893px;top:788px" width="16" height="12" viewBox="0 0 16 12"><path d="M3 5.500a5 4.500 0 0 1 9.500-1.500" stroke="#4a88c8" stroke-width="2.400" fill="none"/><path d="M13 6.500a5 4.500 0 0 1-9.500 1.500" stroke="#4a88c8" stroke-width="2.400" fill="none"/><path d="M9.500 5h6.500l-2.500-4.500z" fill="#4a88c8"/><path d="M6.500 7h-6.500l2.500 4.500z" fill="#4a88c8"/></svg>
<div class="a ui" style="left:913.6px;top:787.19px;font-size:11px;line-height:14px;transform-origin:0 0;transform:scaleX(0.9730);">Refrescar</div>
<div class="a" style="left:968px;top:787px;width:1px;height:16px;background:#d0d0d0;"></div>
<svg class="a" style="left:977px;top:786px" width="15" height="15" viewBox="0 0 15 15"><path d="M2 7a5.500 5.500 0 0 1 9-4" stroke="#5aa08a" stroke-width="3" fill="none"/><path d="M13 8a5.500 5.500 0 0 1-9 4" stroke="#3b78b8" stroke-width="3" fill="none"/><path d="M9 5l5 0l-1-5z" fill="#5aa08a"/><path d="M6 10l-5 0l1 5z" fill="#3b78b8"/></svg>
<div class="a ui" style="left:996.5px;top:787.19px;font-size:11px;line-height:14px;transform-origin:0 0;transform:scaleX(0.9479);">Cambiar usuario</div>
<svg class="a" style="left:1086px;top:786px" width="16" height="16" viewBox="0 0 16 16"><rect width="16" height="16" fill="#e2533d"/><path d="M3.500 3.500l9 9M12.500 3.500l-9 9" stroke="#fff" stroke-width="2.400" fill="none"/></svg>
<div class="a ui" style="left:1107px;top:787.19px;font-size:11px;line-height:14px;transform-origin:0 0;transform:scaleX(0.8585);">Salir</div>
<div class="a" style="left:0px;top:804px;width:1315px;height:1px;background:#cfcfcf;"></div>
<div class="a" style="left:381px;top:806px;width:1px;height:19px;background:#d0d0d0;"></div>
<div class="a" style="left:497px;top:806px;width:1px;height:19px;background:#d0d0d0;"></div>
<div class="a" style="left:593px;top:806px;width:1px;height:19px;background:#d0d0d0;"></div>
<div class="a" style="left:807px;top:806px;width:1px;height:19px;background:#d0d0d0;"></div>
<div class="a" style="left:843px;top:806px;width:1px;height:19px;background:#d0d0d0;"></div>
<div class="a" style="left:879px;top:806px;width:1px;height:19px;background:#d0d0d0;"></div>
<div class="a" style="left:983px;top:806px;width:1px;height:19px;background:#d0d0d0;"></div>
<div class="a" style="left:1117px;top:806px;width:1px;height:19px;background:#d0d0d0;"></div>
<div class="a" style="left:1173px;top:806px;width:1px;height:19px;background:#d0d0d0;"></div>
<div class="a" style="left:1245px;top:806px;width:1px;height:19px;background:#d0d0d0;"></div>
<svg class="a" style="left:388px;top:807px" width="15" height="15" viewBox="0 0 15 15"><path d="M1 7.500L7.500 1.500L14 7.500M2.500 7v7h10V7" stroke="#666" stroke-width="1.200" fill="#fff"/><rect x="5.500" y="9" width="4" height="4" fill="#f0b040" stroke="#a87820"/><rect x="11" y="1" width="2" height="4" fill="#666"/></svg>
<div class="a ui" style="left:408.8px;top:808.49px;font-size:11px;line-height:14px;transform-origin:0 0;transform:scaleX(0.9450);">Delegación:</div>
<div class="a ui" style="left:470.7px;top:808.49px;font-size:11px;line-height:14px;transform-origin:0 0;transform:scaleX(0.8133);">SEC</div>
<svg class="a" style="left:506px;top:807px" width="15" height="15" viewBox="0 0 15 15"><circle cx="7.500" cy="4.500" r="3.500" fill="#62a28e"/><path d="M0.500 14.500c0-6 14-6 14 0z" fill="#62a28e"/></svg>
<div class="a ui" style="left:525.6px;top:808.49px;font-size:11px;line-height:14px;transform-origin:0 0;transform:scaleX(0.9593);">Usuario:</div>
<div class="a ui" style="left:574px;top:808.49px;font-size:11px;line-height:14px;transform-origin:0 0;transform:scaleX(0.9462);">sa</div>
<svg class="a" style="left:601px;top:807px" width="16" height="16" viewBox="0 0 16 16"><circle cx="8" cy="8" r="8" fill="#111"/><rect x="3.500" y="4" width="7" height="5.500" fill="none" stroke="#fff" stroke-width="1.200"/><rect x="6" y="6.500" width="7" height="5.500" fill="#111" stroke="#4a8ae0" stroke-width="1.200"/></svg>
<div class="a ui" style="left:622px;top:808.49px;font-size:11px;line-height:14px;transform-origin:0 0;transform:scaleX(0.9345);">Modo Cliente (SERVIDOR\OFIMEDIC)</div>
<svg class="a" style="left:816px;top:806px" width="16" height="16" viewBox="0 0 16 16"><path d="M0 3h9v5h5.500v8H3L0 13z" fill="#f0c274"/><path d="M0 13h3v3z" fill="#d8a040"/><path d="M11.500 0.500l3.500 3-1.800 0.800-1.700 2.200-2.500-2.200 2-1.500z" fill="#4a80c4"/><path d="M10 5.500L7.500 8" stroke="#4a80c4" stroke-width="1.200"/></svg>
<svg class="a" style="left:851px;top:809px" width="15" height="11" viewBox="0 0 15 11"><rect width="15" height="11" fill="#a8a8a8"/><path d="M0 0l7.500 6L15 0M0 11l6-5.500M15 11L9 5.500" stroke="#ececec" stroke-width="0.900" fill="none"/></svg>
<svg class="a" style="left:888px;top:808px" width="14" height="13" viewBox="0 0 14 13"><rect x="0.500" y="0.500" width="13" height="12" fill="#fff" stroke="#5a5a5a"/><path d="M2 10.500l3-4 2.500 2.800 1.500-1.500 2.500 2.700z" fill="#5a9a80"/><circle cx="9.500" cy="4.300" r="1.400" fill="#e8b060"/></svg>
<div class="a ui" style="left:908.6px;top:808.49px;font-size:11px;line-height:14px;transform-origin:0 0;transform:scaleX(0.9596);">508 Imágenes</div>
<svg class="a" style="left:991px;top:806px" width="14" height="18" viewBox="0 0 14 18"><ellipse cx="7" cy="4" rx="6.500" ry="3.500" fill="#f0b84a"/><path d="M0.500 6.500c0 4 13 4 13 0v3c0 4-13 4-13 0z" fill="#f0b84a"/><path d="M0.500 11.500c0 4 13 4 13 0v3c0 4-13 4-13 0z" fill="#f0b84a"/></svg>
<div class="a ui" style="left:1012px;top:808.49px;font-size:11px;line-height:14px;transform-origin:0 0;transform:scaleX(0.9547);">330,13 MB utilizados</div>
<div class="a ui" style="left:1124.8px;top:808.49px;font-size:11px;line-height:14px;transform-origin:0 0;transform:scaleX(1.0526);">v7.0.0.0</div>
<div class="a ui" style="left:1181.7px;top:808.49px;font-size:11px;line-height:14px;transform-origin:0 0;transform:scaleX(1.0043);">27/09/2018</div>
<div class="a ui" style="left:1253px;top:808.49px;font-size:11px;line-height:14px;transform-origin:0 0;transform:scaleX(0.9916);">10:28</div>
<div class="a" style="left:1310px;top:813px;width:2px;height:2px;background:#777;"></div>
<div class="a" style="left:1306px;top:817px;width:2px;height:2px;background:#777;"></div>
<div class="a" style="left:1310px;top:817px;width:2px;height:2px;background:#777;"></div>
<div class="a" style="left:1302px;top:821px;width:2px;height:2px;background:#777;"></div>
<div class="a" style="left:1306px;top:821px;width:2px;height:2px;background:#777;"></div>
<div class="a" style="left:1310px;top:821px;width:2px;height:2px;background:#777;"></div>
<div class="a" style="left:85px;top:58px;width:908px;height:713px;background:#fff;border:1px solid #1883d7;box-shadow:0 2px 15px 0 rgba(0,0,0,0.30)"></div>
<svg class="a" style="left:95px;top:67px" width="14" height="13" viewBox="0 0 14 13"><path d="M2 11.500L10.500 3" stroke="#3a6ea8" stroke-width="2" fill="none"/><path d="M12 11.500L5.500 5" stroke="#3a6ea8" stroke-width="2" fill="none"/><path d="M0.500 3.500a3 3 0 0 1 4-3L3 2.500l1 1L6 2a3 3 0 0 1-3.500 3.500z" fill="#3a6ea8"/><path d="M9 0.500l4 3.500-1.500 1.500L8 2z" fill="#3a6ea8"/></svg>
<div class="a d" style="left:115.6px;top:66.94px;font-size:12px;line-height:14px;transform-origin:0 0;transform:scaleX(0.9978);">Configuración de Comisiones</div>
<div class="a" style="left:873px;top:73px;width:10px;height:1px;background:#cfcfcf;"></div>
<div class="a" style="left:918px;top:68px;width:10px;height:10px;background:transparent;border:1px solid #111"></div>
<svg class="a" style="left:963px;top:67px" width="12" height="12" viewBox="0 0 12 12"><path d="M1 1L11 11M11 1L1 11" stroke="#111" stroke-width="1.100" fill="none"/></svg>
<div class="a" style="left:95px;top:120px;width:887px;height:610px;background:#fff;border:1px solid #dcdcdc"></div>
<div class="a" style="left:238px;top:100px;width:139px;height:21px;background:#f0f0f0;border:1px solid #d9d9d9"></div>
<div class="a d" style="left:248.1px;top:104.19px;font-size:11px;line-height:14px;transform-origin:0 0;transform:scaleX(1.0147);">Aplicación sobre ventas</div>
<div class="a" style="left:95px;top:98px;width:144px;height:23px;background:#fff;border:1px solid #dcdcdc;border-bottom:none"></div>
<div class="a d" style="left:137.2px;top:102.19px;font-size:11px;line-height:14px;transform-origin:0 0;transform:scaleX(1.0127);">Comisiones</div>
<div class="a d" style="left:115.4px;top:137.79px;font-size:11px;line-height:14px;transform-origin:0 0;transform:scaleX(1.0124);">Desde este formulario puede determinar los porcentajes de comisión que desea otorgar a cada Facultativo para cada concepto de venta. El porcentaje introducido se</div>
<div class="a d" style="left:115.4px;top:150.29px;font-size:11px;line-height:14px;transform-origin:0 0;transform:scaleX(1.0136);">aplicará automáticamente en el momento de realizarse cada venta. Puede introducir el porcentaje directamente en la casilla correspondiente, o introducirlo en la campo</div>
<div class="a d" style="left:115.4px;top:162.79px;font-size:11px;line-height:14px;transform-origin:0 0;transform:scaleX(1.0273);">inferior y aplicarlo a los registros mostrados. Puede filtrar los registros por cualquiera de sus campos y realizar selecciones.</div>
<div class="a d" style="left:115.4px;top:199.79px;font-size:11px;line-height:14px;transform-origin:0 0;transform:scaleX(1.0240);">Facultativo:</div>
<div class="a" style="left:199px;top:196px;width:282px;height:22px;background:#fff;border:1px solid #a6a6a6"></div>
<div class="a" style="left:206px;top:202px;width:89px;height:12px;background:#0078d7;"></div>
<div class="a w" style="left:207px;top:200.59px;font-size:11px;line-height:14px;transform-origin:0 0;transform:scaleX(0.9613);">Dr. Alejandro Mota</div>
<div class="a" style="left:462px;top:199px;width:17px;height:17px;background:#e1e1e1;border:1px solid #adadad"></div>
<svg class="a" style="left:465.500px;top:205px" width="10" height="6" viewBox="0 0 10 6"><path d="M0.500 0.500L5 5L9.500 0.500" stroke="#444" stroke-width="1.100" fill="none"/></svg>
<div class="a d" style="left:115.4px;top:235.79px;font-size:11px;line-height:14px;transform-origin:0 0;transform:scaleX(1.0062);">Descuentos de los conceptos</div>
<div class="a" style="left:113px;top:259px;width:851px;height:389px;background:#fff;border:1px solid #c4c4c4"></div>
<div class="a" style="left:114px;top:298px;width:832px;height:333px;background:#f0f0f0;"></div>
<div class="a d" style="left:155.5px;top:263.09px;font-size:11px;line-height:14px;transform-origin:0 0;transform:scaleX(0.9732);">Baremo</div>
<div class="a" style="left:233px;top:260px;width:1px;height:20px;background:#e2e2e2;"></div>
<div class="a d" style="left:270px;top:263.09px;font-size:11px;line-height:14px;transform-origin:0 0;transform:scaleX(0.9935);">Categoría</div>
<div class="a" style="left:353px;top:260px;width:1px;height:20px;background:#e2e2e2;"></div>
<div class="a d" style="left:398px;top:263.09px;font-size:11px;line-height:14px;transform-origin:0 0;transform:scaleX(1.0301);">Grupo</div>
<div class="a" style="left:473px;top:260px;width:1px;height:20px;background:#e2e2e2;"></div>
<div class="a d" style="left:555.5px;top:263.09px;font-size:11px;line-height:14px;transform-origin:0 0;transform:scaleX(1.0296);">Servicio / Artículo</div>
<div class="a" style="left:723px;top:260px;width:1px;height:20px;background:#e2e2e2;"></div>
<div class="a d" style="left:740.7px;top:263.09px;font-size:11px;line-height:14px;transform-origin:0 0;transform:scaleX(0.9650);">Base Imp.</div>
<div class="a" style="left:803px;top:260px;width:1px;height:20px;background:#e2e2e2;"></div>
<div class="a d" style="left:813.6px;top:263.09px;font-size:11px;line-height:14px;transform-origin:0 0;transform:scaleX(1.0144);">Precio coste</div>
<div class="a" style="left:883px;top:260px;width:1px;height:20px;background:#e2e2e2;"></div>
<div class="a d" style="left:905.6px;top:263.09px;font-size:11px;line-height:14px;transform-origin:0 0;transform:scaleX(0.9625);">Margen</div>
<svg class="a" style="left:117px;top:283px" width="12" height="12" viewBox="0 0 12 12"><rect x="0.500" y="0.500" width="11" height="11" fill="#fbfbff" stroke="#7d7dc8"/><path d="M11.500 0.500v11h-11" stroke="#34349a" fill="none"/><path d="M3 9.800L6 2.500L9 9.800M4 7.200h4" stroke="#5050c0" stroke-width="1.100" fill="none"/><path d="M1.500 10.200h9" stroke="#5050c0" stroke-width="0.800" fill="none"/></svg>
<svg class="a" style="left:237px;top:283px" width="12" height="12" viewBox="0 0 12 12"><rect x="0.500" y="0.500" width="11" height="11" fill="#fbfbff" stroke="#7d7dc8"/><path d="M11.500 0.500v11h-11" stroke="#34349a" fill="none"/><path d="M3 9.800L6 2.500L9 9.800M4 7.200h4" stroke="#5050c0" stroke-width="1.100" fill="none"/><path d="M1.500 10.200h9" stroke="#5050c0" stroke-width="0.800" fill="none"/></svg>
<svg class="a" style="left:357px;top:283px" width="12" height="12" viewBox="0 0 12 12"><rect x="0.500" y="0.500" width="11" height="11" fill="#fbfbff" stroke="#7d7dc8"/><path d="M11.500 0.500v11h-11" stroke="#34349a" fill="none"/><path d="M3 9.800L6 2.500L9 9.800M4 7.200h4" stroke="#5050c0" stroke-width="1.100" fill="none"/><path d="M1.500 10.200h9" stroke="#5050c0" stroke-width="0.800" fill="none"/></svg>
<svg class="a" style="left:477px;top:283px" width="12" height="12" viewBox="0 0 12 12"><rect x="0.500" y="0.500" width="11" height="11" fill="#fbfbff" stroke="#7d7dc8"/><path d="M11.500 0.500v11h-11" stroke="#34349a" fill="none"/><path d="M3 9.800L6 2.500L9 9.800M4 7.200h4" stroke="#5050c0" stroke-width="1.100" fill="none"/><path d="M1.500 10.200h9" stroke="#5050c0" stroke-width="0.800" fill="none"/></svg>
<div class="a" style="left:729px;top:288px;width:7px;height:1px;background:#333;"></div>
<div class="a" style="left:729px;top:291px;width:7px;height:1px;background:#333;"></div>
<div class="a" style="left:809px;top:288px;width:7px;height:1px;background:#333;"></div>
<div class="a" style="left:809px;top:291px;width:7px;height:1px;background:#333;"></div>
<div class="a" style="left:889px;top:288px;width:7px;height:1px;background:#333;"></div>
<div class="a" style="left:889px;top:291px;width:7px;height:1px;background:#333;"></div>
<div class="a" style="left:0;top:0;width:946px;height:630px;overflow:hidden">
<div class="a" style="left:114px;top:299px;width:832px;height:17px;background:#d9e4f8;"></div>
<div class="a d" style="left:120px;top:299.39px;font-size:11px;line-height:14px;letter-spacing:0.1px">Tarifa general Consul</div>
<div class="a d" style="left:239px;top:299.39px;font-size:11px;line-height:14px;letter-spacing:0.1px">Cirugía plástica y repa</div>
<div class="a d" style="left:359px;top:300.39px;font-size:11px;line-height:14px;letter-spacing:0.1px">Intervenciones</div>
<div class="a d" style="left:479px;top:300.39px;font-size:11px;line-height:14px;letter-spacing:0.1px">Anestesista</div>
<div class="a d" style="right:144.7px;top:300.39px;font-size:11px;line-height:14px;transform-origin:100% 0;transform:scaleX(0.975);">560,00 €</div>
<div class="a d" style="right:65px;top:300.39px;font-size:11px;line-height:14px;transform-origin:100% 0;transform:scaleX(0.975);">500,00 €</div>
<div class="a d" style="right:-15.6px;top:300.39px;font-size:11px;line-height:14px;transform-origin:100% 0;transform:scaleX(0.975);color:#000">60,00 €</div>
<div class="a" style="left:114px;top:317px;width:832px;height:17px;background:#dfffbf;"></div>
<div class="a d" style="left:120px;top:317.39px;font-size:11px;line-height:14px;letter-spacing:0.1px">Tarifa general Consul</div>
<div class="a d" style="left:239px;top:318.39px;font-size:11px;line-height:14px;letter-spacing:0.1px">Traumatología</div>
<div class="a d" style="left:359px;top:318.39px;font-size:11px;line-height:14px;letter-spacing:0.1px">Intervenciones</div>
<div class="a d" style="left:479px;top:318.39px;font-size:11px;line-height:14px;letter-spacing:0.1px">Anestesista</div>
<div class="a d" style="right:144.7px;top:318.39px;font-size:11px;line-height:14px;transform-origin:100% 0;transform:scaleX(0.975);">500,00 €</div>
<div class="a d" style="right:65px;top:318.39px;font-size:11px;line-height:14px;transform-origin:100% 0;transform:scaleX(0.975);">0,00 €</div>
<div class="a d" style="right:-15.6px;top:318.39px;font-size:11px;line-height:14px;transform-origin:100% 0;transform:scaleX(0.975);color:#0a820a">500,00 €</div>
<div class="a" style="left:114px;top:335px;width:832px;height:17px;background:#dfffbf;"></div>
<div class="a d" style="left:120px;top:335.39px;font-size:11px;line-height:14px;letter-spacing:0.1px">Tarifa general Consul</div>
<div class="a d" style="left:239px;top:336.39px;font-size:11px;line-height:14px;letter-spacing:0.1px">Traumatología</div>
<div class="a d" style="left:359px;top:336.39px;font-size:11px;line-height:14px;letter-spacing:0.1px">Intervenciones</div>
<div class="a d" style="left:479px;top:336.39px;font-size:11px;line-height:14px;letter-spacing:0.1px">Artroscopia</div>
<div class="a d" style="right:144.7px;top:336.39px;font-size:11px;line-height:14px;transform-origin:100% 0;transform:scaleX(0.975);">1.350,00 €</div>
<div class="a d" style="right:65px;top:336.39px;font-size:11px;line-height:14px;transform-origin:100% 0;transform:scaleX(0.975);">0,00 €</div>
<div class="a d" style="right:-15.6px;top:336.39px;font-size:11px;line-height:14px;transform-origin:100% 0;transform:scaleX(0.975);color:#0a820a">1.350,00 €</div>
<div class="a" style="left:114px;top:353px;width:832px;height:17px;background:#dfffbf;"></div>
<div class="a d" style="left:120px;top:353.39px;font-size:11px;line-height:14px;letter-spacing:0.1px">Tarifa general Consul</div>
<div class="a d" style="left:239px;top:354.39px;font-size:11px;line-height:14px;letter-spacing:0.1px">Otorrinolaringología</div>
<div class="a d" style="left:359px;top:354.39px;font-size:11px;line-height:14px;letter-spacing:0.1px">Audífonos</div>
<div class="a d" style="left:479px;top:354.39px;font-size:11px;line-height:14px;letter-spacing:0.1px">Audífono Siemens Pure 5</div>
<div class="a d" style="right:144.7px;top:354.39px;font-size:11px;line-height:14px;transform-origin:100% 0;transform:scaleX(0.975);">2.500,00 €</div>
<div class="a d" style="right:65px;top:354.39px;font-size:11px;line-height:14px;transform-origin:100% 0;transform:scaleX(0.975);">1,00 €</div>
<div class="a d" style="right:-15.6px;top:354.39px;font-size:11px;line-height:14px;transform-origin:100% 0;transform:scaleX(0.975);color:#0a820a">2.499,00 €</div>
<div class="a" style="left:114px;top:371px;width:832px;height:17px;background:#dfffbf;"></div>
<div class="a d" style="left:120px;top:371.39px;font-size:11px;line-height:14px;letter-spacing:0.1px">Tarifa general Consul</div>
<div class="a d" style="left:239px;top:371.39px;font-size:11px;line-height:14px;letter-spacing:0.1px">Cirugía plástica y repa</div>
<div class="a d" style="left:359px;top:372.39px;font-size:11px;line-height:14px;letter-spacing:0.1px">Actos terapeúticos</div>
<div class="a d" style="left:479px;top:372.39px;font-size:11px;line-height:14px;letter-spacing:0.1px">Avulsión ungueal</div>
<div class="a d" style="right:144.7px;top:372.39px;font-size:11px;line-height:14px;transform-origin:100% 0;transform:scaleX(0.975);">16,56 €</div>
<div class="a d" style="right:65px;top:372.39px;font-size:11px;line-height:14px;transform-origin:100% 0;transform:scaleX(0.975);">0,00 €</div>
<div class="a d" style="right:-15.6px;top:372.39px;font-size:11px;line-height:14px;transform-origin:100% 0;transform:scaleX(0.975);color:#0a820a">16,56 €</div>
<div class="a" style="left:114px;top:389px;width:832px;height:17px;background:#dfffbf;"></div>
<div class="a d" style="left:120px;top:389.39px;font-size:11px;line-height:14px;letter-spacing:0.1px">Tarifa general Consul</div>
<div class="a d" style="left:239px;top:389.39px;font-size:11px;line-height:14px;letter-spacing:0.1px">Cirugía plástica y repa</div>
<div class="a d" style="left:359px;top:390.39px;font-size:11px;line-height:14px;letter-spacing:0.1px">Intervenciones</div>
<div class="a d" style="left:479px;top:390.39px;font-size:11px;line-height:14px;letter-spacing:0.1px">Blefaroplastías</div>
<div class="a d" style="right:144.7px;top:390.39px;font-size:11px;line-height:14px;transform-origin:100% 0;transform:scaleX(0.975);">1.500,00 €</div>
<div class="a d" style="right:65px;top:390.39px;font-size:11px;line-height:14px;transform-origin:100% 0;transform:scaleX(0.975);">0,00 €</div>
<div class="a d" style="right:-15.6px;top:390.39px;font-size:11px;line-height:14px;transform-origin:100% 0;transform:scaleX(0.975);color:#0a820a">1.500,00 €</div>
<div class="a" style="left:114px;top:407px;width:832px;height:17px;background:#dfffbf;"></div>
<div class="a d" style="left:120px;top:407.39px;font-size:11px;line-height:14px;letter-spacing:0.1px">Tarifa general Consul</div>
<div class="a d" style="left:239px;top:408.39px;font-size:11px;line-height:14px;letter-spacing:0.1px">Ginecología</div>
<div class="a d" style="left:359px;top:408.39px;font-size:11px;line-height:14px;letter-spacing:0.1px">Consultas</div>
<div class="a d" style="left:479px;top:408.39px;font-size:11px;line-height:14px;letter-spacing:0.1px">Citología</div>
<div class="a d" style="right:144.7px;top:408.39px;font-size:11px;line-height:14px;transform-origin:100% 0;transform:scaleX(0.975);">50,00 €</div>
<div class="a d" style="right:65px;top:408.39px;font-size:11px;line-height:14px;transform-origin:100% 0;transform:scaleX(0.975);">0,00 €</div>
<div class="a d" style="right:-15.6px;top:408.39px;font-size:11px;line-height:14px;transform-origin:100% 0;transform:scaleX(0.975);color:#0a820a">50,00 €</div>
<div class="a" style="left:114px;top:425px;width:832px;height:17px;background:#dfffbf;"></div>
<div class="a d" style="left:120px;top:425.39px;font-size:11px;line-height:14px;letter-spacing:0.1px">Tarifa general Consul</div>
<div class="a d" style="left:239px;top:425.39px;font-size:11px;line-height:14px;letter-spacing:0.1px">Cirugía plástica y repa</div>
<div class="a d" style="left:359px;top:426.39px;font-size:11px;line-height:14px;letter-spacing:0.1px">Intervenciones</div>
<div class="a d" style="left:479px;top:426.39px;font-size:11px;line-height:14px;letter-spacing:0.1px">Clitoriplástia</div>
<div class="a d" style="right:144.7px;top:426.39px;font-size:11px;line-height:14px;transform-origin:100% 0;transform:scaleX(0.975);">714,00 €</div>
<div class="a d" style="right:65px;top:426.39px;font-size:11px;line-height:14px;transform-origin:100% 0;transform:scaleX(0.975);">0,00 €</div>
<div class="a d" style="right:-15.6px;top:426.39px;font-size:11px;line-height:14px;transform-origin:100% 0;transform:scaleX(0.975);color:#0a820a">714,00 €</div>
<div class="a" style="left:114px;top:443px;width:832px;height:17px;background:#dfffbf;"></div>
<div class="a d" style="left:120px;top:444.39px;font-size:11px;line-height:14px;letter-spacing:0.1px">Asepeyo</div>
<div class="a d" style="left:239px;top:444.39px;font-size:11px;line-height:14px;letter-spacing:0.1px">Pediatría</div>
<div class="a d" style="left:359px;top:444.39px;font-size:11px;line-height:14px;letter-spacing:0.1px">Consultas</div>
<div class="a d" style="left:479px;top:444.39px;font-size:11px;line-height:14px;letter-spacing:0.1px">Consulta</div>
<div class="a d" style="right:144.7px;top:444.39px;font-size:11px;line-height:14px;transform-origin:100% 0;transform:scaleX(0.975);">50,00 €</div>
<div class="a d" style="right:65px;top:444.39px;font-size:11px;line-height:14px;transform-origin:100% 0;transform:scaleX(0.975);">0,00 €</div>
<div class="a d" style="right:-15.6px;top:444.39px;font-size:11px;line-height:14px;transform-origin:100% 0;transform:scaleX(0.975);color:#0a820a">50,00 €</div>
<div class="a" style="left:114px;top:461px;width:832px;height:17px;background:#dfffbf;"></div>
<div class="a d" style="left:120px;top:462.39px;font-size:11px;line-height:14px;letter-spacing:0.1px">Mutua Gallega</div>
<div class="a d" style="left:239px;top:462.39px;font-size:11px;line-height:14px;letter-spacing:0.1px">General</div>
<div class="a d" style="left:359px;top:462.39px;font-size:11px;line-height:14px;letter-spacing:0.1px">General</div>
<div class="a d" style="left:479px;top:462.39px;font-size:11px;line-height:14px;letter-spacing:0.1px">Consulta</div>
<div class="a d" style="right:144.7px;top:462.39px;font-size:11px;line-height:14px;transform-origin:100% 0;transform:scaleX(0.975);">18,00 €</div>
<div class="a d" style="right:65px;top:462.39px;font-size:11px;line-height:14px;transform-origin:100% 0;transform:scaleX(0.975);">0,00 €</div>
<div class="a d" style="right:-15.6px;top:462.39px;font-size:11px;line-height:14px;transform-origin:100% 0;transform:scaleX(0.975);color:#0a820a">18,00 €</div>
<div class="a" style="left:114px;top:479px;width:832px;height:17px;background:#dfffbf;"></div>
<div class="a d" style="left:120px;top:480.39px;font-size:11px;line-height:14px;letter-spacing:0.1px">Asepeyo</div>
<div class="a d" style="left:239px;top:479.39px;font-size:11px;line-height:14px;letter-spacing:0.1px">Ginecología y Obstetri</div>
<div class="a d" style="left:359px;top:480.39px;font-size:11px;line-height:14px;letter-spacing:0.1px">Consultas</div>
<div class="a d" style="left:479px;top:480.39px;font-size:11px;line-height:14px;letter-spacing:0.1px">Consulta</div>
<div class="a d" style="right:144.7px;top:480.39px;font-size:11px;line-height:14px;transform-origin:100% 0;transform:scaleX(0.975);">50,00 €</div>
<div class="a d" style="right:65px;top:480.39px;font-size:11px;line-height:14px;transform-origin:100% 0;transform:scaleX(0.975);">0,00 €</div>
<div class="a d" style="right:-15.6px;top:480.39px;font-size:11px;line-height:14px;transform-origin:100% 0;transform:scaleX(0.975);color:#0a820a">50,00 €</div>
<div class="a" style="left:114px;top:497px;width:832px;height:17px;background:#f5f6fd;"></div>
<div class="a d" style="left:120px;top:498.39px;font-size:11px;line-height:14px;letter-spacing:0.1px">Tarifa Abonado</div>
<div class="a d" style="left:239px;top:497.39px;font-size:11px;line-height:14px;letter-spacing:0.1px">Medicina General Abo</div>
<div class="a d" style="left:359px;top:498.39px;font-size:11px;line-height:14px;letter-spacing:0.1px">Consultas</div>
<div class="a d" style="left:479px;top:498.39px;font-size:11px;line-height:14px;letter-spacing:0.1px">Consulta abonado</div>
<div class="a d" style="right:144.7px;top:498.39px;font-size:11px;line-height:14px;transform-origin:100% 0;transform:scaleX(0.975);">1,00 €</div>
<div class="a d" style="right:65px;top:498.39px;font-size:11px;line-height:14px;transform-origin:100% 0;transform:scaleX(0.975);">0,00 €</div>
<div class="a d" style="right:-15.6px;top:498.39px;font-size:11px;line-height:14px;transform-origin:100% 0;transform:scaleX(0.975);color:#0a820a">1,00 €</div>
<div class="a" style="left:114px;top:515px;width:832px;height:17px;background:#dfffbf;"></div>
<div class="a d" style="left:120px;top:515.39px;font-size:11px;line-height:14px;letter-spacing:0.1px">Tarifa general Consul</div>
<div class="a d" style="left:239px;top:516.39px;font-size:11px;line-height:14px;letter-spacing:0.1px">Dietista</div>
<div class="a d" style="left:359px;top:516.39px;font-size:11px;line-height:14px;letter-spacing:0.1px">General</div>
<div class="a d" style="left:479px;top:516.39px;font-size:11px;line-height:14px;letter-spacing:0.1px">Consulta Dietista</div>
<div class="a d" style="right:144.7px;top:516.39px;font-size:11px;line-height:14px;transform-origin:100% 0;transform:scaleX(0.975);">30,00 €</div>
<div class="a d" style="right:65px;top:516.39px;font-size:11px;line-height:14px;transform-origin:100% 0;transform:scaleX(0.975);">0,00 €</div>
<div class="a d" style="right:-15.6px;top:516.39px;font-size:11px;line-height:14px;transform-origin:100% 0;transform:scaleX(0.975);color:#0a820a">30,00 €</div>
<div class="a" style="left:114px;top:533px;width:832px;height:17px;background:#dfffbf;"></div>
<div class="a d" style="left:120px;top:534.39px;font-size:11px;line-height:14px;letter-spacing:0.1px">ABV</div>
<div class="a d" style="left:239px;top:534.39px;font-size:11px;line-height:14px;letter-spacing:0.1px">Medicina General</div>
<div class="a d" style="left:359px;top:534.39px;font-size:11px;line-height:14px;letter-spacing:0.1px">Consultas</div>
<div class="a d" style="left:479px;top:534.39px;font-size:11px;line-height:14px;letter-spacing:0.1px">Consulta normal</div>
<div class="a d" style="right:144.7px;top:534.39px;font-size:11px;line-height:14px;transform-origin:100% 0;transform:scaleX(0.975);">12,00 €</div>
<div class="a d" style="right:65px;top:534.39px;font-size:11px;line-height:14px;transform-origin:100% 0;transform:scaleX(0.975);">0,00 €</div>
<div class="a d" style="right:-15.6px;top:534.39px;font-size:11px;line-height:14px;transform-origin:100% 0;transform:scaleX(0.975);color:#0a820a">12,00 €</div>
<div class="a" style="left:114px;top:551px;width:832px;height:17px;background:#dfffbf;"></div>
<div class="a d" style="left:120px;top:551.39px;font-size:11px;line-height:14px;letter-spacing:0.1px">Tarifa general Consul</div>
<div class="a d" style="left:239px;top:552.39px;font-size:11px;line-height:14px;letter-spacing:0.1px">Ginecología</div>
<div class="a d" style="left:359px;top:552.39px;font-size:11px;line-height:14px;letter-spacing:0.1px">Consultas</div>
<div class="a d" style="left:479px;top:552.39px;font-size:11px;line-height:14px;letter-spacing:0.1px">Consulta normal</div>
<div class="a d" style="right:144.7px;top:552.39px;font-size:11px;line-height:14px;transform-origin:100% 0;transform:scaleX(0.975);">60,00 €</div>
<div class="a d" style="right:65px;top:552.39px;font-size:11px;line-height:14px;transform-origin:100% 0;transform:scaleX(0.975);">0,00 €</div>
<div class="a d" style="right:-15.6px;top:552.39px;font-size:11px;line-height:14px;transform-origin:100% 0;transform:scaleX(0.975);color:#0a820a">60,00 €</div>
<div class="a" style="left:114px;top:569px;width:832px;height:17px;background:#dfffbf;"></div>
<div class="a d" style="left:120px;top:570.39px;font-size:11px;line-height:14px;letter-spacing:0.1px">Adeslas</div>
<div class="a d" style="left:239px;top:570.39px;font-size:11px;line-height:14px;letter-spacing:0.1px">Medicina General</div>
<div class="a d" style="left:359px;top:570.39px;font-size:11px;line-height:14px;letter-spacing:0.1px">Consultas</div>
<div class="a d" style="left:479px;top:570.39px;font-size:11px;line-height:14px;letter-spacing:0.1px">Consulta normal</div>
<div class="a d" style="right:144.7px;top:570.39px;font-size:11px;line-height:14px;transform-origin:100% 0;transform:scaleX(0.975);">12,00 €</div>
<div class="a d" style="right:65px;top:570.39px;font-size:11px;line-height:14px;transform-origin:100% 0;transform:scaleX(0.975);">0,00 €</div>
<div class="a d" style="right:-15.6px;top:570.39px;font-size:11px;line-height:14px;transform-origin:100% 0;transform:scaleX(0.975);color:#0a820a">12,00 €</div>
<div class="a" style="left:114px;top:587px;width:832px;height:17px;background:#dfffbf;"></div>
<div class="a d" style="left:120px;top:587.39px;font-size:11px;line-height:14px;letter-spacing:0.1px">Tarifa general Consul</div>
<div class="a d" style="left:239px;top:588.39px;font-size:11px;line-height:14px;letter-spacing:0.1px">Medicina general</div>
<div class="a d" style="left:359px;top:588.39px;font-size:11px;line-height:14px;letter-spacing:0.1px">Consultas</div>
<div class="a d" style="left:479px;top:588.39px;font-size:11px;line-height:14px;letter-spacing:0.1px">Consulta normal</div>
<div class="a d" style="right:144.7px;top:588.39px;font-size:11px;line-height:14px;transform-origin:100% 0;transform:scaleX(0.975);">60,00 €</div>
<div class="a d" style="right:65px;top:588.39px;font-size:11px;line-height:14px;transform-origin:100% 0;transform:scaleX(0.975);">0,00 €</div>
<div class="a d" style="right:-15.6px;top:588.39px;font-size:11px;line-height:14px;transform-origin:100% 0;transform:scaleX(0.975);color:#0a820a">60,00 €</div>
<div class="a" style="left:114px;top:605px;width:832px;height:17px;background:#dfffbf;"></div>
<div class="a d" style="left:120px;top:606.39px;font-size:11px;line-height:14px;letter-spacing:0.1px">Sanitas</div>
<div class="a d" style="left:239px;top:606.39px;font-size:11px;line-height:14px;letter-spacing:0.1px">Traumatolgía</div>
<div class="a d" style="left:359px;top:606.39px;font-size:11px;line-height:14px;letter-spacing:0.1px">General</div>
<div class="a d" style="left:479px;top:606.39px;font-size:11px;line-height:14px;letter-spacing:0.1px">Consulta normal</div>
<div class="a d" style="right:144.7px;top:606.39px;font-size:11px;line-height:14px;transform-origin:100% 0;transform:scaleX(0.975);">25,00 €</div>
<div class="a d" style="right:65px;top:606.39px;font-size:11px;line-height:14px;transform-origin:100% 0;transform:scaleX(0.975);">0,00 €</div>
<div class="a d" style="right:-15.6px;top:606.39px;font-size:11px;line-height:14px;transform-origin:100% 0;transform:scaleX(0.975);color:#0a820a">25,00 €</div>
<div class="a" style="left:114px;top:623px;width:832px;height:17px;background:#dfffbf;"></div>
<div class="a d" style="left:120px;top:623.39px;font-size:11px;line-height:14px;letter-spacing:0.1px">Tarifa general Consul</div>
<div class="a d" style="left:239px;top:623.39px;font-size:11px;line-height:14px;letter-spacing:0.1px">Cirugía plástica y repa</div>
<div class="a d" style="left:359px;top:624.39px;font-size:11px;line-height:14px;letter-spacing:0.1px">Consultas</div>
<div class="a d" style="left:479px;top:624.39px;font-size:11px;line-height:14px;letter-spacing:0.1px">Consulta normal</div>
<div class="a d" style="right:144.7px;top:624.39px;font-size:11px;line-height:14px;transform-origin:100% 0;transform:scaleX(0.975);">82,64 €</div>
<div class="a d" style="right:65px;top:624.39px;font-size:11px;line-height:14px;transform-origin:100% 0;transform:scaleX(0.975);">51,00 €</div>
<div class="a d" style="right:-15.6px;top:624.39px;font-size:11px;line-height:14px;transform-origin:100% 0;transform:scaleX(0.975);color:#0a820a">31,64 €</div>
</div>
<div class="a" style="left:947px;top:260px;width:16px;height:370px;background:#f0f0f0;"></div>
<div class="a" style="left:947px;top:278px;width:15px;height:41px;background:#cdcdcd;"></div>
<svg class="a" style="left:950.500px;top:266px" width="9" height="6" viewBox="0 0 9 6"><path d="M0.500 5.500L4.500 1.500L8.500 5.500" stroke="#444" stroke-width="1.500" fill="none"/></svg>
<svg class="a" style="left:950.500px;top:619px" width="9" height="6" viewBox="0 0 9 6"><path d="M0.500 0.500L4.500 4.500L8.500 0.500" stroke="#444" stroke-width="1.500" fill="none"/></svg>
<div class="a" style="left:114px;top:630px;width:849px;height:17px;background:#f0f0f0;"></div>
<div class="a" style="left:131px;top:631px;width:547px;height:16px;background:#cdcdcd;"></div>
<svg class="a" style="left:119px;top:634px" width="6" height="9" viewBox="0 0 6 9"><path d="M5.500 0.500L1.500 4.500L5.500 8.500" stroke="#333" stroke-width="1.600" fill="none"/></svg>
<svg class="a" style="left:935px;top:634px" width="6" height="9" viewBox="0 0 6 9"><path d="M0.500 0.500L4.500 4.500L0.500 8.500" stroke="#333" stroke-width="1.600" fill="none"/></svg>
<div class="a d" style="left:115px;top:662.99px;font-size:11px;line-height:14px;transform-origin:0 0;transform:scaleX(1.0162);">Asignar</div>
<div class="a" style="left:157px;top:659px;width:50px;height:21px;background:#fff;border:1px solid #abadb3"></div>
<div class="a d" style="left:212.1px;top:662.99px;font-size:11px;line-height:14px;transform-origin:0 0;transform:scaleX(1.0068);">a todos los conceptos mostrados</div>
<div class="a" style="left:379px;top:660px;width:60px;height:20px;background:#e1e1e1;border:1px solid #adadad"></div>
<div class="a d" style="left:389.9px;top:662.99px;font-size:11px;line-height:14px;transform-origin:0 0;transform:scaleX(1.0215);">Asignar</div>
<div class="a d" style="left:167.3px;top:691.89px;font-size:11px;line-height:14px;transform-origin:0 0;transform:scaleX(1.0214);">Reiniciar todas las comisiones mostradas</div>
<div class="a" style="left:379px;top:688px;width:60px;height:20px;background:#e1e1e1;border:1px solid #adadad"></div>
<div class="a d" style="left:387px;top:690.99px;font-size:11px;line-height:14px;transform-origin:0 0;transform:scaleX(1.0398);">Reiniciar</div>
<div class="a" style="left:816px;top:674px;width:147px;height:37px;background:#e1e1e1;border:1px solid #adadad"></div>
<div class="a d" style="left:841.9px;top:685.94px;font-size:12px;line-height:14px;transform-origin:0 0;transform:scaleX(0.9426);">Aplicar comisiones</div>
<div class="a" style="left:909px;top:740px;width:70px;height:20px;background:#e1e1e1;border:1px solid #adadad"></div>
<div class="a d" style="left:928px;top:742.89px;font-size:11px;line-height:14px;transform-origin:0 0;transform:scaleX(1.0202);">Cerrar</div>
</body></html>
